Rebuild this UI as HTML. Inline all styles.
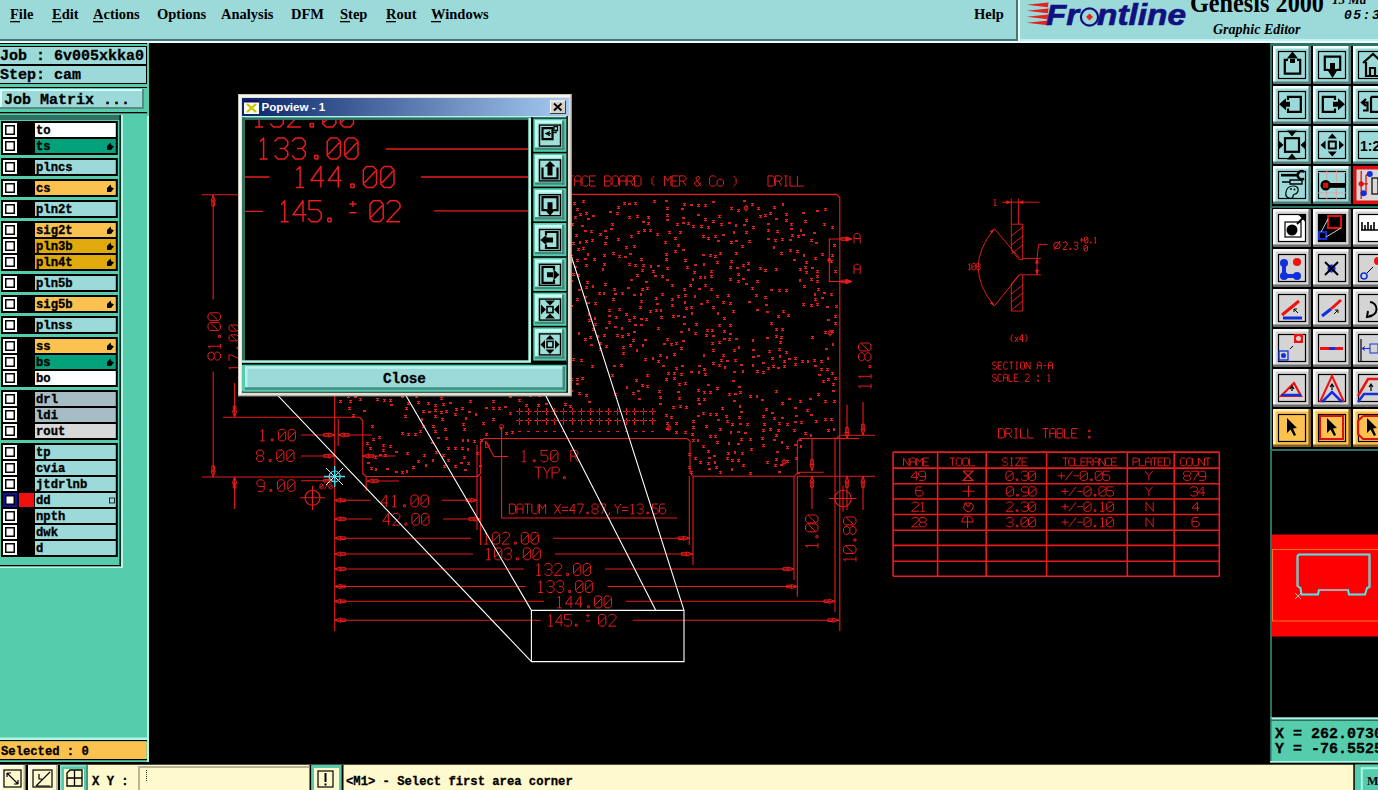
<!DOCTYPE html>
<html><head><meta charset="utf-8"><title>Genesis 2000 - Graphic Editor</title>
<style>html,body{margin:0;padding:0;background:#000;overflow:hidden}svg{display:block}</style></head>
<body><svg width="1378" height="790" viewBox="0 0 1378 790">
<rect x="0" y="0" width="1378" height="790" fill="#000" />
<rect x="0" y="0" width="1020" height="39" fill="#9cdada" />
<rect x="0" y="39" width="1020" height="2" fill="#4a7474" />
<rect x="1016" y="0" width="2" height="41" fill="#4a7474" />
<rect x="1018" y="0" width="2" height="41" fill="#e8fcfc" />
<rect x="1020" y="0" width="358" height="39" fill="#9cdada" />
<rect x="1020" y="39" width="358" height="2" fill="#c8f0f0" />
<rect x="0" y="41" width="1378" height="2" fill="#e8ffff" />
<text x="10" y="19" font-family="Liberation Serif" font-size="14.5" font-weight="bold" fill="#000" >File</text>
<rect x="10" y="21" width="10" height="1.3" fill="#000" />
<text x="52" y="19" font-family="Liberation Serif" font-size="14.5" font-weight="bold" fill="#000" >Edit</text>
<rect x="52" y="21" width="10" height="1.3" fill="#000" />
<text x="93" y="19" font-family="Liberation Serif" font-size="14.5" font-weight="bold" fill="#000" >Actions</text>
<rect x="93" y="21" width="10" height="1.3" fill="#000" />
<text x="157" y="19" font-family="Liberation Serif" font-size="14.5" font-weight="bold" fill="#000" >Options</text>
<text x="221" y="19" font-family="Liberation Serif" font-size="14.5" font-weight="bold" fill="#000" >Analysis</text>
<text x="291" y="19" font-family="Liberation Serif" font-size="14.5" font-weight="bold" fill="#000" >DFM</text>
<text x="340" y="19" font-family="Liberation Serif" font-size="14.5" font-weight="bold" fill="#000" >Step</text>
<rect x="340" y="21" width="10" height="1.3" fill="#000" />
<text x="386" y="19" font-family="Liberation Serif" font-size="14.5" font-weight="bold" fill="#000" >Rout</text>
<rect x="386" y="21" width="10" height="1.3" fill="#000" />
<text x="431" y="19" font-family="Liberation Serif" font-size="14.5" font-weight="bold" fill="#000" >Windows</text>
<rect x="431" y="21" width="10" height="1.3" fill="#000" />
<text x="974" y="19" font-family="Liberation Serif" font-size="14.5" font-weight="bold" fill="#000" >Help</text>
<g>
<path d="M1026.5 4.8 L1048.6 2.5999999999999996 L1047.8 7.199999999999999 Z" fill="#e82020"/>
<path d="M1026.5 10.8 L1048.6 8.600000000000001 L1047.8 13.200000000000001 Z" fill="#e82020"/>
<path d="M1026.5 16.8 L1048.6 14.600000000000001 L1047.8 19.2 Z" fill="#e82020"/>
<path d="M1026.5 22.8 L1048.6 20.6 L1047.8 25.2 Z" fill="#e82020"/>
<text x="1046" y="25" font-family="Liberation Sans" font-size="30" font-weight="bold" font-style="italic" fill="#10107e" stroke="#10107e" stroke-width="0.7" textLength="33" lengthAdjust="spacingAndGlyphs">Fr</text>
<circle cx="1089.5" cy="17" r="8.6" fill="none" stroke="#10107e" stroke-width="2.2"/><path d="M1089.5 13.5 L1093 17 L1089.5 20.5 L1086 17 Z" fill="#e82020"/>
<text x="1097" y="25" font-family="Liberation Sans" font-size="30" font-weight="bold" font-style="italic" fill="#10107e" stroke="#10107e" stroke-width="0.7" textLength="89" lengthAdjust="spacingAndGlyphs">ntline</text>
</g>
<text x="1190" y="12" font-family="Liberation Serif" font-size="27" font-weight="bold" fill="#000" textLength="134" lengthAdjust="spacingAndGlyphs">Genesis 2000</text>
<text x="1213" y="34" font-family="Liberation Serif" font-size="14" font-weight="bold" fill="#000" font-style="italic">Graphic Editor</text>
<text x="1332" y="4" font-family="Liberation Serif" font-size="13" font-weight="bold" fill="#000" font-style="italic">15  Ma</text>
<text x="1344" y="18.5" font-family="Liberation Mono" font-size="13" font-weight="bold" fill="#000" font-style="italic" letter-spacing="1.5">05:3</text>
<rect x="0" y="43" width="149" height="722" fill="#55cdad" />
<rect x="147" y="116" width="2" height="649" fill="#b4f6e6" />
<rect x="0" y="43" width="147" height="1" fill="#000" />
<rect x="0" y="46" width="147" height="1" fill="#000" />
<rect x="0" y="47" width="146" height="17" fill="#9cdada" />
<rect x="0" y="64" width="147" height="2" fill="#000" />
<rect x="0" y="66" width="146" height="17" fill="#9cdada" />
<rect x="0" y="83" width="147" height="1" fill="#000" />
<rect x="146" y="46" width="1" height="38" fill="#000" />
<text x="0" y="60" font-family="Liberation Mono" font-size="15" font-weight="bold" fill="#000" stroke="#000" stroke-width="0.3">Job : 6v005xkka0</text>
<text x="0" y="79" font-family="Liberation Mono" font-size="15" font-weight="bold" fill="#000" stroke="#000" stroke-width="0.3">Step: cam</text>
<rect x="0" y="87" width="147" height="1" fill="#000" />
<rect x="0" y="89" width="144" height="20" fill="#9cdada" />
<rect x="0" y="89" width="144" height="2" fill="#d8fafa" />
<rect x="0" y="89" width="2" height="20" fill="#d8fafa" />
<rect x="0" y="107" width="144" height="2" fill="#5a8a86" />
<rect x="142" y="89" width="2" height="20" fill="#5a8a86" />
<text x="4" y="104" font-family="Liberation Mono" font-size="15" font-weight="bold" fill="#000" stroke="#000" stroke-width="0.3">Job Matrix ...</text>
<rect x="0" y="112" width="147" height="1.3" fill="#000" />
<rect x="0" y="115" width="121" height="5" fill="#2e7062" />
<rect x="119.5" y="115" width="1.3" height="451" fill="#000" />
<rect x="121" y="115" width="2" height="453" fill="#b4f6e6" />
<rect x="0" y="566" width="123" height="2" fill="#b4f6e6" />
<rect x="0" y="565" width="121" height="1.3" fill="#000" />
<rect x="1" y="121" width="116.8" height="34" fill="#000" />
<rect x="3" y="123" width="14" height="14" fill="#fff" />
<rect x="5" y="125" width="10" height="10" fill="#000" />
<rect x="6.5" y="126.5" width="7" height="7" fill="#fff" />
<rect x="35" y="123" width="80.8" height="14" fill="#ffffff" />
<text x="36" y="134" font-family="Liberation Mono" font-size="12.2" font-weight="bold" fill="#000" stroke="#000" stroke-width="0.35">to</text>
<rect x="3" y="139" width="14" height="14" fill="#fff" />
<rect x="5" y="141" width="10" height="10" fill="#000" />
<rect x="6.5" y="142.5" width="7" height="7" fill="#fff" />
<rect x="35" y="139" width="80.8" height="14" fill="#04a27a" />
<text x="36" y="150" font-family="Liberation Mono" font-size="12.2" font-weight="bold" fill="#000" stroke="#000" stroke-width="0.35">ts</text>
<path d="M107 150 V146 L110.5 142.5 L111.3 145.3 L114 146.3 L111 150 Z" fill="#000"/>
<rect x="1" y="158" width="116.8" height="18" fill="#000" />
<rect x="3" y="160" width="14" height="14" fill="#fff" />
<rect x="5" y="162" width="10" height="10" fill="#000" />
<rect x="6.5" y="163.5" width="7" height="7" fill="#fff" />
<rect x="35" y="160" width="80.8" height="14" fill="#9cdada" />
<text x="36" y="171" font-family="Liberation Mono" font-size="12.2" font-weight="bold" fill="#000" stroke="#000" stroke-width="0.35">plncs</text>
<rect x="1" y="179" width="116.8" height="18" fill="#000" />
<rect x="3" y="181" width="14" height="14" fill="#fff" />
<rect x="5" y="183" width="10" height="10" fill="#000" />
<rect x="6.5" y="184.5" width="7" height="7" fill="#fff" />
<rect x="35" y="181" width="80.8" height="14" fill="#fcc250" />
<text x="36" y="192" font-family="Liberation Mono" font-size="12.2" font-weight="bold" fill="#000" stroke="#000" stroke-width="0.35">cs</text>
<path d="M107 192 V188 L110.5 184.5 L111.3 187.3 L114 188.3 L111 192 Z" fill="#000"/>
<rect x="1" y="200" width="116.8" height="18" fill="#000" />
<rect x="3" y="202" width="14" height="14" fill="#fff" />
<rect x="5" y="204" width="10" height="10" fill="#000" />
<rect x="6.5" y="205.5" width="7" height="7" fill="#fff" />
<rect x="35" y="202" width="80.8" height="14" fill="#9cdada" />
<text x="36" y="213" font-family="Liberation Mono" font-size="12.2" font-weight="bold" fill="#000" stroke="#000" stroke-width="0.35">pln2t</text>
<rect x="1" y="221" width="116.8" height="50" fill="#000" />
<rect x="3" y="223" width="14" height="14" fill="#fff" />
<rect x="5" y="225" width="10" height="10" fill="#000" />
<rect x="6.5" y="226.5" width="7" height="7" fill="#fff" />
<rect x="35" y="223" width="80.8" height="14" fill="#fcc250" />
<text x="36" y="234" font-family="Liberation Mono" font-size="12.2" font-weight="bold" fill="#000" stroke="#000" stroke-width="0.35">sig2t</text>
<path d="M107 234 V230 L110.5 226.5 L111.3 229.3 L114 230.3 L111 234 Z" fill="#000"/>
<rect x="3" y="239" width="14" height="14" fill="#fff" />
<rect x="5" y="241" width="10" height="10" fill="#000" />
<rect x="6.5" y="242.5" width="7" height="7" fill="#fff" />
<rect x="35" y="239" width="80.8" height="14" fill="#e0aa0c" />
<text x="36" y="250" font-family="Liberation Mono" font-size="12.2" font-weight="bold" fill="#000" stroke="#000" stroke-width="0.35">pln3b</text>
<path d="M107 250 V246 L110.5 242.5 L111.3 245.3 L114 246.3 L111 250 Z" fill="#000"/>
<rect x="3" y="255" width="14" height="14" fill="#fff" />
<rect x="5" y="257" width="10" height="10" fill="#000" />
<rect x="6.5" y="258.5" width="7" height="7" fill="#fff" />
<rect x="35" y="255" width="80.8" height="14" fill="#e0aa0c" />
<text x="36" y="266" font-family="Liberation Mono" font-size="12.2" font-weight="bold" fill="#000" stroke="#000" stroke-width="0.35">pln4t</text>
<path d="M107 266 V262 L110.5 258.5 L111.3 261.3 L114 262.3 L111 266 Z" fill="#000"/>
<rect x="1" y="274" width="116.8" height="18" fill="#000" />
<rect x="3" y="276" width="14" height="14" fill="#fff" />
<rect x="5" y="278" width="10" height="10" fill="#000" />
<rect x="6.5" y="279.5" width="7" height="7" fill="#fff" />
<rect x="35" y="276" width="80.8" height="14" fill="#9cdada" />
<text x="36" y="287" font-family="Liberation Mono" font-size="12.2" font-weight="bold" fill="#000" stroke="#000" stroke-width="0.35">pln5b</text>
<rect x="1" y="295" width="116.8" height="18" fill="#000" />
<rect x="3" y="297" width="14" height="14" fill="#fff" />
<rect x="5" y="299" width="10" height="10" fill="#000" />
<rect x="6.5" y="300.5" width="7" height="7" fill="#fff" />
<rect x="35" y="297" width="80.8" height="14" fill="#fcc250" />
<text x="36" y="308" font-family="Liberation Mono" font-size="12.2" font-weight="bold" fill="#000" stroke="#000" stroke-width="0.35">sig5b</text>
<path d="M107 308 V304 L110.5 300.5 L111.3 303.3 L114 304.3 L111 308 Z" fill="#000"/>
<rect x="1" y="316" width="116.8" height="18" fill="#000" />
<rect x="3" y="318" width="14" height="14" fill="#fff" />
<rect x="5" y="320" width="10" height="10" fill="#000" />
<rect x="6.5" y="321.5" width="7" height="7" fill="#fff" />
<rect x="35" y="318" width="80.8" height="14" fill="#9cdada" />
<text x="36" y="329" font-family="Liberation Mono" font-size="12.2" font-weight="bold" fill="#000" stroke="#000" stroke-width="0.35">plnss</text>
<rect x="1" y="337" width="116.8" height="50" fill="#000" />
<rect x="3" y="339" width="14" height="14" fill="#fff" />
<rect x="5" y="341" width="10" height="10" fill="#000" />
<rect x="6.5" y="342.5" width="7" height="7" fill="#fff" />
<rect x="35" y="339" width="80.8" height="14" fill="#fcc250" />
<text x="36" y="350" font-family="Liberation Mono" font-size="12.2" font-weight="bold" fill="#000" stroke="#000" stroke-width="0.35">ss</text>
<path d="M107 350 V346 L110.5 342.5 L111.3 345.3 L114 346.3 L111 350 Z" fill="#000"/>
<rect x="3" y="355" width="14" height="14" fill="#fff" />
<rect x="5" y="357" width="10" height="10" fill="#000" />
<rect x="6.5" y="358.5" width="7" height="7" fill="#fff" />
<rect x="35" y="355" width="80.8" height="14" fill="#04a27a" />
<text x="36" y="366" font-family="Liberation Mono" font-size="12.2" font-weight="bold" fill="#000" stroke="#000" stroke-width="0.35">bs</text>
<path d="M107 366 V362 L110.5 358.5 L111.3 361.3 L114 362.3 L111 366 Z" fill="#000"/>
<rect x="3" y="371" width="14" height="14" fill="#fff" />
<rect x="5" y="373" width="10" height="10" fill="#000" />
<rect x="6.5" y="374.5" width="7" height="7" fill="#fff" />
<rect x="35" y="371" width="80.8" height="14" fill="#ffffff" />
<text x="36" y="382" font-family="Liberation Mono" font-size="12.2" font-weight="bold" fill="#000" stroke="#000" stroke-width="0.35">bo</text>
<rect x="1" y="390" width="116.8" height="50" fill="#000" />
<rect x="3" y="392" width="14" height="14" fill="#fff" />
<rect x="5" y="394" width="10" height="10" fill="#000" />
<rect x="6.5" y="395.5" width="7" height="7" fill="#fff" />
<rect x="35" y="392" width="80.8" height="14" fill="#a8bcc4" />
<text x="36" y="403" font-family="Liberation Mono" font-size="12.2" font-weight="bold" fill="#000" stroke="#000" stroke-width="0.35">drl</text>
<rect x="3" y="408" width="14" height="14" fill="#fff" />
<rect x="5" y="410" width="10" height="10" fill="#000" />
<rect x="6.5" y="411.5" width="7" height="7" fill="#fff" />
<rect x="35" y="408" width="80.8" height="14" fill="#a8bcc4" />
<text x="36" y="419" font-family="Liberation Mono" font-size="12.2" font-weight="bold" fill="#000" stroke="#000" stroke-width="0.35">ldi</text>
<rect x="3" y="424" width="14" height="14" fill="#fff" />
<rect x="5" y="426" width="10" height="10" fill="#000" />
<rect x="6.5" y="427.5" width="7" height="7" fill="#fff" />
<rect x="35" y="424" width="80.8" height="14" fill="#d8d8d8" />
<text x="36" y="435" font-family="Liberation Mono" font-size="12.2" font-weight="bold" fill="#000" stroke="#000" stroke-width="0.35">rout</text>
<rect x="1" y="443" width="116.8" height="114" fill="#000" />
<rect x="3" y="445" width="14" height="14" fill="#fff" />
<rect x="5" y="447" width="10" height="10" fill="#000" />
<rect x="6.5" y="448.5" width="7" height="7" fill="#fff" />
<rect x="35" y="445" width="80.8" height="14" fill="#9cdada" />
<text x="36" y="456" font-family="Liberation Mono" font-size="12.2" font-weight="bold" fill="#000" stroke="#000" stroke-width="0.35">tp</text>
<rect x="3" y="461" width="14" height="14" fill="#fff" />
<rect x="5" y="463" width="10" height="10" fill="#000" />
<rect x="6.5" y="464.5" width="7" height="7" fill="#fff" />
<rect x="35" y="461" width="80.8" height="14" fill="#9cdada" />
<text x="36" y="472" font-family="Liberation Mono" font-size="12.2" font-weight="bold" fill="#000" stroke="#000" stroke-width="0.35">cvia</text>
<rect x="3" y="477" width="14" height="14" fill="#fff" />
<rect x="5" y="479" width="10" height="10" fill="#000" />
<rect x="6.5" y="480.5" width="7" height="7" fill="#fff" />
<rect x="35" y="477" width="80.8" height="14" fill="#9cdada" />
<text x="36" y="488" font-family="Liberation Mono" font-size="12.2" font-weight="bold" fill="#000" stroke="#000" stroke-width="0.35">jtdrlnb</text>
<rect x="3" y="493" width="14" height="14" fill="#1010a0" />
<rect x="5" y="495" width="10" height="10" fill="#000" />
<rect x="6.5" y="496.5" width="7" height="7" fill="#fff" />
<rect x="19" y="493" width="15" height="14" fill="#f01010" />
<rect x="35" y="493" width="80.8" height="14" fill="#9cdada" />
<text x="36" y="504" font-family="Liberation Mono" font-size="12.2" font-weight="bold" fill="#000" stroke="#000" stroke-width="0.35">dd</text>
<rect x="109.5" y="498" width="5" height="5" fill="none" stroke="#000" stroke-width="0.8"/>
<rect x="3" y="509" width="14" height="14" fill="#fff" />
<rect x="5" y="511" width="10" height="10" fill="#000" />
<rect x="6.5" y="512.5" width="7" height="7" fill="#fff" />
<rect x="35" y="509" width="80.8" height="14" fill="#9cdada" />
<text x="36" y="520" font-family="Liberation Mono" font-size="12.2" font-weight="bold" fill="#000" stroke="#000" stroke-width="0.35">npth</text>
<rect x="3" y="525" width="14" height="14" fill="#fff" />
<rect x="5" y="527" width="10" height="10" fill="#000" />
<rect x="6.5" y="528.5" width="7" height="7" fill="#fff" />
<rect x="35" y="525" width="80.8" height="14" fill="#9cdada" />
<text x="36" y="536" font-family="Liberation Mono" font-size="12.2" font-weight="bold" fill="#000" stroke="#000" stroke-width="0.35">dwk</text>
<rect x="3" y="541" width="14" height="14" fill="#fff" />
<rect x="5" y="543" width="10" height="10" fill="#000" />
<rect x="6.5" y="544.5" width="7" height="7" fill="#fff" />
<rect x="35" y="541" width="80.8" height="14" fill="#9cdada" />
<text x="36" y="552" font-family="Liberation Mono" font-size="12.2" font-weight="bold" fill="#000" stroke="#000" stroke-width="0.35">d</text>
<rect x="0" y="737.5" width="147" height="2.5" fill="#b4f6e6" />
<rect x="0" y="740" width="147" height="1.3" fill="#000" />
<rect x="0" y="741.3" width="146.5" height="17.7" fill="#fcc250" />
<rect x="0" y="759" width="147" height="1.2" fill="#000" />
<text x="1" y="755" font-family="Liberation Mono" font-size="12.2" font-weight="bold" fill="#000" stroke="#000" stroke-width="0.3">Selected : 0</text>
<rect x="0" y="763" width="1378" height="27" fill="#fffacd" />
<rect x="0" y="762" width="1378" height="1.5" fill="#000" />
<rect x="0" y="765" width="25.5" height="25" fill="#fffacd" />
<rect x="0" y="765" width="25.5" height="1.5" fill="#fff" />
<rect x="0" y="765" width="1.5" height="25" fill="#fff" />
<rect x="23.5" y="765" width="2" height="25" fill="#b8b494" />
<rect x="25.5" y="765" width="2.5" height="25" fill="#000" />
<rect x="28" y="765" width="30" height="25" fill="#fffacd" />
<rect x="28" y="765" width="30" height="1.5" fill="#fff" />
<rect x="28" y="765" width="1.5" height="25" fill="#fff" />
<rect x="56" y="765" width="2" height="25" fill="#b8b494" />
<rect x="58" y="765" width="2" height="25" fill="#000" />
<rect x="60" y="765" width="28" height="25" fill="#55cdad" />
<rect x="60" y="765" width="28" height="1.5" fill="#8ee0cc" />
<rect x="60" y="765" width="1.5" height="25" fill="#8ee0cc" />
<rect x="86" y="765" width="2" height="25" fill="#3c9c84" />
<rect x="64" y="769" width="20" height="21" fill="#fffacd" />
<rect x="4" y="770" width="17" height="17" fill="none" stroke="#000" stroke-width="1.2"/>
<path d="M7 773 L18 784 M7 773 l0 4 M7 773 l4 0 M18 784 l-4 0 M18 784 l0 -4" stroke="#000" stroke-width="1.2" fill="none"/>
<rect x="33" y="770" width="19" height="17" fill="none" stroke="#000" stroke-width="1.2"/>
<path d="M36 786 L50 772 M36 786 L50 786 M39 774 L39 779 L42 779" stroke="#000" stroke-width="1.2" fill="none"/>
<path d="M67 779 L67 773 L70 770 L82 770 L82 786 L67 786 Z M74.5 770 L74.5 786 M67 778 L82 778" stroke="#000" stroke-width="1.3" fill="none"/>
<text x="92" y="785" font-family="Liberation Mono" font-size="12.2" font-weight="bold" fill="#000" stroke="#000" stroke-width="0.3">X Y :</text>
<rect x="138" y="766" width="171" height="24" fill="#b8b494" />
<rect x="140" y="768" width="169" height="22" fill="#fffacd" />
<path d="M146.5 770 L146.5 782" stroke="#000" stroke-width="0.8" stroke-dasharray="1,1"/>
<rect x="309.5" y="765" width="2" height="25" fill="#000" />
<rect x="311.5" y="765" width="30" height="25" fill="#55cdad" />
<rect x="314" y="768" width="25" height="22" fill="#fffacd" />
<rect x="318" y="771" width="15" height="16" fill="none" stroke="#000" stroke-width="1.2"/>
<rect x="324.5" y="773" width="2" height="9" fill="#000"/><rect x="324.5" y="783.5" width="2" height="2" fill="#000"/>
<rect x="341.5" y="765" width="2" height="25" fill="#000" />
<text x="346" y="785" font-family="Liberation Mono" font-size="12.2" font-weight="bold" fill="#000" stroke="#000" stroke-width="0.3">&lt;M1&gt; - Select first area corner</text>
<rect x="0" y="763" width="1378" height="1.7" fill="#000" />
<rect x="1353.3" y="763" width="1.6" height="27" fill="#000" />
<rect x="1354.9" y="764.7" width="24" height="26" fill="#55cdad" />
<rect x="1360.8" y="767.2" width="18" height="2" fill="#a8f8e8" />
<rect x="1360.8" y="767.2" width="2" height="23" fill="#a8f8e8" />
<text x="1367" y="785" font-family="Liberation Serif" font-size="12.2" font-weight="bold" fill="#000" >MD</text>
<rect x="1270" y="43" width="108" height="720" fill="#000" />
<rect x="1270" y="43" width="2" height="165" fill="#2e7062" />
<rect x="1272" y="43" width="106" height="3" fill="#2e7062" />
<rect x="1270" y="206" width="108" height="2" fill="#2e7062" />
<rect x="1272" y="208" width="106" height="1" fill="#000" />
<rect x="1273" y="46" width="38" height="38" fill="#9cdada" />
<rect x="1273" y="46" width="38" height="2.5" fill="#f4ffff" />
<rect x="1273" y="46" width="2.5" height="38" fill="#f4ffff" />
<rect x="1273" y="81.5" width="38" height="2.5" fill="#557a78" />
<rect x="1308.5" y="46" width="2.5" height="38" fill="#557a78" />
<rect x="1278.5" y="51.5" width="27" height="27" fill="none" stroke="#000" stroke-width="1.2"/>
<rect x="1313" y="46" width="38" height="38" fill="#9cdada" />
<rect x="1313" y="46" width="38" height="2.5" fill="#f4ffff" />
<rect x="1313" y="46" width="2.5" height="38" fill="#f4ffff" />
<rect x="1313" y="81.5" width="38" height="2.5" fill="#557a78" />
<rect x="1348.5" y="46" width="2.5" height="38" fill="#557a78" />
<rect x="1318.5" y="51.5" width="27" height="27" fill="none" stroke="#000" stroke-width="1.2"/>
<rect x="1353" y="46" width="38" height="38" fill="#9cdada" />
<rect x="1353" y="46" width="38" height="2.5" fill="#f4ffff" />
<rect x="1353" y="46" width="2.5" height="38" fill="#f4ffff" />
<rect x="1353" y="81.5" width="38" height="2.5" fill="#557a78" />
<rect x="1388.5" y="46" width="2.5" height="38" fill="#557a78" />
<rect x="1358.5" y="51.5" width="27" height="27" fill="none" stroke="#000" stroke-width="1.2"/>
<rect x="1273" y="86" width="38" height="38" fill="#9cdada" />
<rect x="1273" y="86" width="38" height="2.5" fill="#f4ffff" />
<rect x="1273" y="86" width="2.5" height="38" fill="#f4ffff" />
<rect x="1273" y="121.5" width="38" height="2.5" fill="#557a78" />
<rect x="1308.5" y="86" width="2.5" height="38" fill="#557a78" />
<rect x="1278.5" y="91.5" width="27" height="27" fill="none" stroke="#000" stroke-width="1.2"/>
<rect x="1313" y="86" width="38" height="38" fill="#9cdada" />
<rect x="1313" y="86" width="38" height="2.5" fill="#f4ffff" />
<rect x="1313" y="86" width="2.5" height="38" fill="#f4ffff" />
<rect x="1313" y="121.5" width="38" height="2.5" fill="#557a78" />
<rect x="1348.5" y="86" width="2.5" height="38" fill="#557a78" />
<rect x="1318.5" y="91.5" width="27" height="27" fill="none" stroke="#000" stroke-width="1.2"/>
<rect x="1353" y="86" width="38" height="38" fill="#9cdada" />
<rect x="1353" y="86" width="38" height="2.5" fill="#f4ffff" />
<rect x="1353" y="86" width="2.5" height="38" fill="#f4ffff" />
<rect x="1353" y="121.5" width="38" height="2.5" fill="#557a78" />
<rect x="1388.5" y="86" width="2.5" height="38" fill="#557a78" />
<rect x="1358.5" y="91.5" width="27" height="27" fill="none" stroke="#000" stroke-width="1.2"/>
<rect x="1273" y="126" width="38" height="38" fill="#9cdada" />
<rect x="1273" y="126" width="38" height="2.5" fill="#f4ffff" />
<rect x="1273" y="126" width="2.5" height="38" fill="#f4ffff" />
<rect x="1273" y="161.5" width="38" height="2.5" fill="#557a78" />
<rect x="1308.5" y="126" width="2.5" height="38" fill="#557a78" />
<rect x="1278.5" y="131.5" width="27" height="27" fill="none" stroke="#000" stroke-width="1.2"/>
<rect x="1313" y="126" width="38" height="38" fill="#9cdada" />
<rect x="1313" y="126" width="38" height="2.5" fill="#f4ffff" />
<rect x="1313" y="126" width="2.5" height="38" fill="#f4ffff" />
<rect x="1313" y="161.5" width="38" height="2.5" fill="#557a78" />
<rect x="1348.5" y="126" width="2.5" height="38" fill="#557a78" />
<rect x="1318.5" y="131.5" width="27" height="27" fill="none" stroke="#000" stroke-width="1.2"/>
<rect x="1353" y="126" width="38" height="38" fill="#9cdada" />
<rect x="1353" y="126" width="38" height="2.5" fill="#f4ffff" />
<rect x="1353" y="126" width="2.5" height="38" fill="#f4ffff" />
<rect x="1353" y="161.5" width="38" height="2.5" fill="#557a78" />
<rect x="1388.5" y="126" width="2.5" height="38" fill="#557a78" />
<rect x="1358.5" y="131.5" width="27" height="27" fill="none" stroke="#000" stroke-width="1.2"/>
<rect x="1273" y="166" width="38" height="38" fill="#9cdada" />
<rect x="1273" y="166" width="38" height="2.5" fill="#f4ffff" />
<rect x="1273" y="166" width="2.5" height="38" fill="#f4ffff" />
<rect x="1273" y="201.5" width="38" height="2.5" fill="#557a78" />
<rect x="1308.5" y="166" width="2.5" height="38" fill="#557a78" />
<rect x="1278.5" y="171.5" width="27" height="27" fill="none" stroke="#000" stroke-width="1.2"/>
<rect x="1313" y="166" width="38" height="38" fill="#9cdada" />
<rect x="1313" y="166" width="38" height="2.5" fill="#f4ffff" />
<rect x="1313" y="166" width="2.5" height="38" fill="#f4ffff" />
<rect x="1313" y="201.5" width="38" height="2.5" fill="#557a78" />
<rect x="1348.5" y="166" width="2.5" height="38" fill="#557a78" />
<rect x="1318.5" y="171.5" width="27" height="27" fill="none" stroke="#000" stroke-width="1.2"/>
<rect x="1353" y="166" width="38" height="38" fill="#9cdada" />
<rect x="1353" y="166" width="38" height="2.5" fill="#f4ffff" />
<rect x="1353" y="166" width="2.5" height="38" fill="#f4ffff" />
<rect x="1353" y="201.5" width="38" height="2.5" fill="#557a78" />
<rect x="1388.5" y="166" width="2.5" height="38" fill="#557a78" />
<rect x="1358.5" y="171.5" width="27" height="27" fill="none" stroke="#000" stroke-width="1.2"/>
<rect x="1270" y="208" width="2" height="245" fill="#4a8078" />
<rect x="1273" y="209" width="38" height="38" fill="#d4d4d4" />
<rect x="1273" y="209" width="38" height="2.5" fill="#f8f8f8" />
<rect x="1273" y="209" width="2.5" height="38" fill="#f8f8f8" />
<rect x="1273" y="244.5" width="38" height="2.5" fill="#6c6c6c" />
<rect x="1308.5" y="209" width="2.5" height="38" fill="#6c6c6c" />
<rect x="1278" y="214" width="28" height="28" fill="#fff" />
<rect x="1278.5" y="214.5" width="27" height="27" fill="none" stroke="#000" stroke-width="1.2"/>
<rect x="1313" y="209" width="38" height="38" fill="#d4d4d4" />
<rect x="1313" y="209" width="38" height="2.5" fill="#f8f8f8" />
<rect x="1313" y="209" width="2.5" height="38" fill="#f8f8f8" />
<rect x="1313" y="244.5" width="38" height="2.5" fill="#6c6c6c" />
<rect x="1348.5" y="209" width="2.5" height="38" fill="#6c6c6c" />
<rect x="1318" y="214" width="28" height="28" fill="#000" />
<rect x="1318.5" y="214.5" width="27" height="27" fill="none" stroke="#000" stroke-width="1.2"/>
<rect x="1353" y="209" width="38" height="38" fill="#d4d4d4" />
<rect x="1353" y="209" width="38" height="2.5" fill="#f8f8f8" />
<rect x="1353" y="209" width="2.5" height="38" fill="#f8f8f8" />
<rect x="1353" y="244.5" width="38" height="2.5" fill="#6c6c6c" />
<rect x="1388.5" y="209" width="2.5" height="38" fill="#6c6c6c" />
<rect x="1358" y="214" width="28" height="28" fill="#fff" />
<rect x="1358.5" y="214.5" width="27" height="27" fill="none" stroke="#000" stroke-width="1.2"/>
<rect x="1273" y="249" width="38" height="38" fill="#d4d4d4" />
<rect x="1273" y="249" width="38" height="2.5" fill="#f8f8f8" />
<rect x="1273" y="249" width="2.5" height="38" fill="#f8f8f8" />
<rect x="1273" y="284.5" width="38" height="2.5" fill="#6c6c6c" />
<rect x="1308.5" y="249" width="2.5" height="38" fill="#6c6c6c" />
<rect x="1278.5" y="254.5" width="27" height="27" fill="none" stroke="#000" stroke-width="1.2"/>
<rect x="1313" y="249" width="38" height="38" fill="#d4d4d4" />
<rect x="1313" y="249" width="38" height="2.5" fill="#f8f8f8" />
<rect x="1313" y="249" width="2.5" height="38" fill="#f8f8f8" />
<rect x="1313" y="284.5" width="38" height="2.5" fill="#6c6c6c" />
<rect x="1348.5" y="249" width="2.5" height="38" fill="#6c6c6c" />
<rect x="1318.5" y="254.5" width="27" height="27" fill="none" stroke="#000" stroke-width="1.2"/>
<rect x="1353" y="249" width="38" height="38" fill="#d4d4d4" />
<rect x="1353" y="249" width="38" height="2.5" fill="#f8f8f8" />
<rect x="1353" y="249" width="2.5" height="38" fill="#f8f8f8" />
<rect x="1353" y="284.5" width="38" height="2.5" fill="#6c6c6c" />
<rect x="1388.5" y="249" width="2.5" height="38" fill="#6c6c6c" />
<rect x="1358.5" y="254.5" width="27" height="27" fill="none" stroke="#000" stroke-width="1.2"/>
<rect x="1273" y="289" width="38" height="38" fill="#d4d4d4" />
<rect x="1273" y="289" width="38" height="2.5" fill="#f8f8f8" />
<rect x="1273" y="289" width="2.5" height="38" fill="#f8f8f8" />
<rect x="1273" y="324.5" width="38" height="2.5" fill="#6c6c6c" />
<rect x="1308.5" y="289" width="2.5" height="38" fill="#6c6c6c" />
<rect x="1278.5" y="294.5" width="27" height="27" fill="none" stroke="#000" stroke-width="1.2"/>
<rect x="1313" y="289" width="38" height="38" fill="#d4d4d4" />
<rect x="1313" y="289" width="38" height="2.5" fill="#f8f8f8" />
<rect x="1313" y="289" width="2.5" height="38" fill="#f8f8f8" />
<rect x="1313" y="324.5" width="38" height="2.5" fill="#6c6c6c" />
<rect x="1348.5" y="289" width="2.5" height="38" fill="#6c6c6c" />
<rect x="1318.5" y="294.5" width="27" height="27" fill="none" stroke="#000" stroke-width="1.2"/>
<rect x="1353" y="289" width="38" height="38" fill="#d4d4d4" />
<rect x="1353" y="289" width="38" height="2.5" fill="#f8f8f8" />
<rect x="1353" y="289" width="2.5" height="38" fill="#f8f8f8" />
<rect x="1353" y="324.5" width="38" height="2.5" fill="#6c6c6c" />
<rect x="1388.5" y="289" width="2.5" height="38" fill="#6c6c6c" />
<rect x="1358.5" y="294.5" width="27" height="27" fill="none" stroke="#000" stroke-width="1.2"/>
<rect x="1273" y="329" width="38" height="38" fill="#d4d4d4" />
<rect x="1273" y="329" width="38" height="2.5" fill="#f8f8f8" />
<rect x="1273" y="329" width="2.5" height="38" fill="#f8f8f8" />
<rect x="1273" y="364.5" width="38" height="2.5" fill="#6c6c6c" />
<rect x="1308.5" y="329" width="2.5" height="38" fill="#6c6c6c" />
<rect x="1278.5" y="334.5" width="27" height="27" fill="none" stroke="#000" stroke-width="1.2"/>
<rect x="1313" y="329" width="38" height="38" fill="#d4d4d4" />
<rect x="1313" y="329" width="38" height="2.5" fill="#f8f8f8" />
<rect x="1313" y="329" width="2.5" height="38" fill="#f8f8f8" />
<rect x="1313" y="364.5" width="38" height="2.5" fill="#6c6c6c" />
<rect x="1348.5" y="329" width="2.5" height="38" fill="#6c6c6c" />
<rect x="1318.5" y="334.5" width="27" height="27" fill="none" stroke="#000" stroke-width="1.2"/>
<rect x="1353" y="329" width="38" height="38" fill="#d4d4d4" />
<rect x="1353" y="329" width="38" height="2.5" fill="#f8f8f8" />
<rect x="1353" y="329" width="2.5" height="38" fill="#f8f8f8" />
<rect x="1353" y="364.5" width="38" height="2.5" fill="#6c6c6c" />
<rect x="1388.5" y="329" width="2.5" height="38" fill="#6c6c6c" />
<rect x="1358.5" y="334.5" width="27" height="27" fill="none" stroke="#000" stroke-width="1.2"/>
<rect x="1273" y="369" width="38" height="38" fill="#d4d4d4" />
<rect x="1273" y="369" width="38" height="2.5" fill="#f8f8f8" />
<rect x="1273" y="369" width="2.5" height="38" fill="#f8f8f8" />
<rect x="1273" y="404.5" width="38" height="2.5" fill="#6c6c6c" />
<rect x="1308.5" y="369" width="2.5" height="38" fill="#6c6c6c" />
<rect x="1278.5" y="374.5" width="27" height="27" fill="none" stroke="#000" stroke-width="1.2"/>
<rect x="1313" y="369" width="38" height="38" fill="#d4d4d4" />
<rect x="1313" y="369" width="38" height="2.5" fill="#f8f8f8" />
<rect x="1313" y="369" width="2.5" height="38" fill="#f8f8f8" />
<rect x="1313" y="404.5" width="38" height="2.5" fill="#6c6c6c" />
<rect x="1348.5" y="369" width="2.5" height="38" fill="#6c6c6c" />
<rect x="1318.5" y="374.5" width="27" height="27" fill="none" stroke="#000" stroke-width="1.2"/>
<rect x="1353" y="369" width="38" height="38" fill="#d4d4d4" />
<rect x="1353" y="369" width="38" height="2.5" fill="#f8f8f8" />
<rect x="1353" y="369" width="2.5" height="38" fill="#f8f8f8" />
<rect x="1353" y="404.5" width="38" height="2.5" fill="#6c6c6c" />
<rect x="1388.5" y="369" width="2.5" height="38" fill="#6c6c6c" />
<rect x="1358.5" y="374.5" width="27" height="27" fill="none" stroke="#000" stroke-width="1.2"/>
<rect x="1273" y="409" width="38" height="38" fill="#fcc250" />
<rect x="1273" y="409" width="38" height="2.5" fill="#fff0c0" />
<rect x="1273" y="409" width="2.5" height="38" fill="#fff0c0" />
<rect x="1273" y="444.5" width="38" height="2.5" fill="#806020" />
<rect x="1308.5" y="409" width="2.5" height="38" fill="#806020" />
<rect x="1278.5" y="414.5" width="27" height="27" fill="none" stroke="#000" stroke-width="1.2"/>
<rect x="1313" y="409" width="38" height="38" fill="#fcc250" />
<rect x="1313" y="409" width="38" height="2.5" fill="#fff0c0" />
<rect x="1313" y="409" width="2.5" height="38" fill="#fff0c0" />
<rect x="1313" y="444.5" width="38" height="2.5" fill="#806020" />
<rect x="1348.5" y="409" width="2.5" height="38" fill="#806020" />
<rect x="1318.5" y="414.5" width="27" height="27" fill="none" stroke="#000" stroke-width="1.2"/>
<rect x="1353" y="409" width="38" height="38" fill="#fcc250" />
<rect x="1353" y="409" width="38" height="2.5" fill="#fff0c0" />
<rect x="1353" y="409" width="2.5" height="38" fill="#fff0c0" />
<rect x="1353" y="444.5" width="38" height="2.5" fill="#806020" />
<rect x="1388.5" y="409" width="2.5" height="38" fill="#806020" />
<rect x="1358.5" y="414.5" width="27" height="27" fill="none" stroke="#000" stroke-width="1.2"/>
<rect x="1270" y="449" width="108" height="2" fill="#2e7062" />
<rect x="1270" y="451" width="2" height="270" fill="#2e7062" />
<path d="M1288 59.8 H1284.8 V73.6 H1300.2 V59.8 H1297" stroke="#000" fill="none" stroke-width="2.2"/><path d="M1292.5 51.5 L1286.8 58.5 L1298.2 58.5 Z M1290 58 h5 v5 h-5 z" fill="#000"/>
<path d="M1328 69.8 H1324.8 V56.6 H1340.2 V69.8 H1337" stroke="#000" fill="none" stroke-width="2.2"/><path d="M1332.5 78 L1326.8 69 L1338.2 69 Z M1330 63 h5 v6.5 h-5 z" fill="#000"/>
<path d="M1363 63 L1373 54 L1383 63 M1366 62 L1366 76 L1380 76 M1370 76 L1370 68 L1375 68 L1375 76" stroke="#000" fill="none" stroke-width="2.2"/>
<path d="M1288 100 V96.8 H1300.8 V111.8 H1288 V108.5" stroke="#000" fill="none" stroke-width="2.2"/><path d="M1279 104.3 L1286 98.3 L1286 110.3 Z M1285 101.8 h5 v5 h-5 z" fill="#000"/>
<path d="M1335 100 V96.8 H1322.8 V111.8 H1335 V108.5" stroke="#000" fill="none" stroke-width="2.2"/><path d="M1345 104.3 L1338 98.3 L1338 110.3 Z M1333 101.8 h5 v5 h-5 z" fill="#000"/>
<path d="M1366 99 L1362 102.5 L1366 106 M1362 102.5 H1367.5 V110.5 H1363 M1371 96.8 H1380 M1371 96.8 V111.8 H1380" stroke="#000" fill="none" stroke-width="2.2"/>
<rect x="1285" y="138.2" width="14" height="13.6" stroke="#000" fill="none" stroke-width="2.2"/><path d="M1292 136.5 L1287 130.5 L1297 130.5 Z M1292 153.5 L1287 159.5 L1297 159.5 Z M1283.5 145 L1278 140 L1278 150 Z M1300.5 145 L1306 140 L1306 150 Z" fill="#000"/>
<rect x="1328.8" y="141.5" width="7" height="7" stroke="#000" stroke-width="2" fill="none"/><path d="M1332.3 133.5 L1327.8 138.5 L1336.8 138.5 Z M1332.3 156.5 L1327.8 151.5 L1336.8 151.5 Z M1320.5 145 L1325.5 140.5 L1325.5 149.5 Z M1344 145 L1339 140.5 L1339 149.5 Z" fill="#000"/>
<text x="1360" y="150.5" font-family="Liberation Sans" font-weight="bold" font-size="14" fill="#000">1:2</text>
<path d="M1281 175.2 H1297" stroke="#000" stroke-width="2.6"/><path d="M1304 172 A4 4 0 1 0 1304 178.5" stroke="#000" stroke-width="2.4" fill="none"/><path d="M1282 182 H1290 M1290 180 H1302 V184 H1290 Z" stroke="#000" stroke-width="1.3" fill="none"/><path d="M1286 192 q1 -6 7 -6 q6 0 5 5 q-1 3 -3 3 q-2 0 -2 3 q-1 2 -4 1 q-4 -1 -3 -6 z" stroke="#000" fill="none" stroke-width="1.2"/><circle cx="1291" cy="189" r="0.9" fill="#000"/><circle cx="1294.5" cy="189.5" r="0.9" fill="#000"/>
<path d="M1318 172.4 H1346 M1318 192.9 H1346 M1326.8 170 V201 M1336.4 170 V201" stroke="#e0a0a0" stroke-width="0.9"/><circle cx="1325.7" cy="185.3" r="5.2" fill="#000"/><rect x="1323.2" y="182.8" width="5" height="5" fill="#e01010"/><rect x="1330" y="183" width="15" height="4.8" fill="#000"/>
<rect x="1353" y="166" width="25" height="38" fill="#e01010"/><rect x="1356.5" y="169.5" width="21.5" height="31" fill="#d8d8d8"/><path d="M1361.2 171 V199 M1361.2 183.8 H1368 M1366 175 V195 M1366 175 H1370 M1366 193 H1363" stroke="#e01010" stroke-width="1.3" fill="none"/><circle cx="1369.8" cy="174" r="3" fill="#1030e0"/><circle cx="1361.2" cy="183.8" r="2.6" fill="#e01010"/><circle cx="1363.5" cy="193.3" r="3" fill="#1030e0"/><rect x="1372" y="178" width="6" height="16" fill="none" stroke="#000" stroke-width="1.2"/>
<rect x="1285" y="222" width="16" height="15" fill="none" stroke="#000" stroke-width="1.2"/><circle cx="1292" cy="230" r="5.5" fill="#000"/><path d="M1297 224 L1304 217 M1301 216 L1305 216 L1305 220 Z" stroke="#000" stroke-width="2" fill="#000"/>
<rect x="1328" y="216" width="13" height="12" fill="none" stroke="#e01010" stroke-width="2"/><rect x="1319" y="232" width="7" height="7" fill="none" stroke="#1030e0" stroke-width="2"/><path d="M1321 232 L1328 219 M1326 237 L1341 228" stroke="#fff" stroke-width="0.8"/>
<path d="M1361 230 L1378 230 M1362 222 L1362 230 M1365 225 L1365 230 M1368 222 L1368 230 M1371 225 L1371 230 M1374 222 L1374 230" stroke="#000" stroke-width="1.6"/>
<path d="M1284 264 L1284 276 L1296 276" stroke="#1030e0" stroke-width="4" fill="none"/><circle cx="1284" cy="263" r="4" fill="#1030e0"/><circle cx="1284" cy="276" r="4" fill="#1030e0"/><circle cx="1297" cy="276" r="4" fill="#1030e0"/><circle cx="1297" cy="262" r="4" fill="#f01010"/>
<circle cx="1331.5" cy="268.5" r="4" fill="#1030e0"/><path d="M1325 262 L1338 275 M1338 262 L1325 275" stroke="#000" stroke-width="2"/>
<circle cx="1364" cy="276" r="3" fill="none" stroke="#1030e0" stroke-width="1.6"/><circle cx="1378" cy="261" r="4" fill="#f01010"/><path d="M1367 273 L1373 267" stroke="#000" stroke-width="1"/>
<path d="M1282 315 L1299 301" stroke="#f01010" stroke-width="3"/><path d="M1283 318 L1302 318" stroke="#1030e0" stroke-width="3"/><path d="M1298 313 L1294 309 M1294 309 L1294 312 M1294 309 L1297 309" stroke="#000" stroke-width="1"/>
<path d="M1322 316 L1331 309" stroke="#1030e0" stroke-width="3"/><path d="M1331 309 L1341 300" stroke="#f01010" stroke-width="3"/><path d="M1334 314 L1338 310 M1338 310 L1335 310 M1338 310 L1338 313" stroke="#000" stroke-width="1"/>
<path d="M1370 302 a6 6 0 1 1 -1 14 M1368 311 L1367 317 L1372 316" stroke="#000" stroke-width="2" fill="none"/>
<rect x="1294" y="334" width="9" height="9" fill="#f01010"/><circle cx="1298.5" cy="338.5" r="2.5" fill="#d4d4d4"/><rect x="1279" y="351" width="9" height="9" fill="none" stroke="#1030e0" stroke-width="1.3"/><circle cx="1283.5" cy="355.5" r="2.5" fill="#1030e0"/><path d="M1290 349 L1293 346" stroke="#000" stroke-width="1"/>
<path d="M1320 348.5 L1343 348.5" stroke="#f01010" stroke-width="3"/><path d="M1329 348.5 L1335 348.5" stroke="#1030e0" stroke-width="3"/>
<path d="M1361 339 L1361 361" stroke="#000" stroke-width="1.2"/><rect x="1370" y="344" width="8" height="9" fill="none" stroke="#1030e0" stroke-width="1"/><path d="M1362 348.5 L1370 348.5 M1362 348.5 l3 -2 M1362 348.5 l3 2" stroke="#1030e0" stroke-width="1"/>
<path d="M1281 396 L1294 383 L1301 396 Z" stroke="#f01010" stroke-width="2.2" fill="none"/><path d="M1281 395 L1301 395" stroke="#1030e0" stroke-width="2.5"/><path d="M1292 391 L1292 387 M1290 389 L1292 386 L1294 389" stroke="#000" stroke-width="1.2" fill="none"/>
<path d="M1320 402 L1332 376 L1344 402" stroke="#f01010" stroke-width="2" fill="none"/><path d="M1322 402 L1332 392 L1342 402" stroke="#1030e0" stroke-width="2.5" fill="none"/><path d="M1332 390 L1332 385 M1330 387 L1332 384 L1334 387" stroke="#000" stroke-width="1.2" fill="none"/>
<path d="M1358 396 L1368 379 L1378 379" stroke="#f01010" stroke-width="2.5" fill="none"/><path d="M1358 402 L1364 394 L1378 394" stroke="#1030e0" stroke-width="2.5" fill="none"/><path d="M1371 391 L1371 385 M1369 387 L1371 384 L1373 387" stroke="#000" stroke-width="1.2" fill="none"/>
<path d="M1287 418 L1287 433 L1290.5 429.5 L1294 436 L1296 435 L1293 428.5 L1297 428 Z" fill="#000"/>
<rect x="1320" y="416" width="23" height="23" fill="none" stroke="#e01010" stroke-width="2"/><path d="M1327 418 L1327 433 L1330.5 429.5 L1334 436 L1336 435 L1333 428.5 L1337 428 Z" fill="#000"/>
<path d="M1363 416 L1378 416 M1363 416 L1358 421 L1358 434 L1363 439 L1378 439" stroke="#e01010" stroke-width="2" fill="none"/><path d="M1367 418 L1367 433 L1370.5 429.5 L1374 436 L1376 435 L1373 428.5 L1377 428 Z" fill="#000"/>
<rect x="1272" y="534.5" width="106" height="102" fill="#ff0000" />
<path d="M1272.5 549.5 L1378 549.5 M1272.5 621 L1378 621 M1272.5 549.5 L1272.5 621" stroke="#ff9020" stroke-width="0.8" fill="none"/>
<path d="M1299 554.5 L1369.5 554.5 L1369.5 587 L1367 588 L1365 594.5 L1349 594.5 L1348 590 L1319 590 L1318 594.5 L1301.5 594.5 L1300.5 588 L1297.5 586 L1297.5 556 Z" stroke="#50e8f0" stroke-width="2" fill="none"/><path d="M1369.5 556 L1369.5 587 M1319 590 L1348 590 M1297.5 558 L1297.5 585" stroke="#a8a8a8" stroke-width="2" fill="none"/>
<path d="M1295 593 L1301 599 M1301 593 L1295 599" stroke="#e0e0e0" stroke-width="0.8"/>
<rect x="1270" y="717.5" width="108" height="45" fill="#55cdad" />
<rect x="1270" y="717.5" width="108" height="2" fill="#b4f6e6" />
<rect x="1270" y="719.5" width="108" height="1.5" fill="#2e7062" />
<rect x="1270" y="717.5" width="1.5" height="45" fill="#2e7062" />
<rect x="1270" y="761" width="108" height="1.5" fill="#b4f6e6" />
<text x="1275" y="738" font-family="Liberation Mono" font-size="15" font-weight="bold" fill="#000" stroke="#000" stroke-width="0.3">X = 262.0730</text>
<text x="1275" y="753" font-family="Liberation Mono" font-size="15" font-weight="bold" fill="#000" stroke="#000" stroke-width="0.3">Y = -76.5525</text>
<svg x="149" y="43" width="1121" height="719" viewBox="149 43 1121 719">
<circle cx="312.5" cy="497.8" r="7.5" fill="none" stroke="#e81c1c" stroke-width="1.1"/>
<circle cx="843" cy="498.5" r="8.2" fill="none" stroke="#e81c1c" stroke-width="1.1"/>
<circle cx="829.3" cy="260" r="2" fill="#e81c1c"/>
<path d="M852 239 l-6 -2.5 v5 z M852 281.5 l-6 -2.5 v5 z" fill="#e81c1c"/>
<circle cx="501.6" cy="426.5" r="2" fill="none" stroke="#e81c1c"/>
<path d="M1011.3 224.2L1022.7 224.2L1022.7 259.6L1019.0 259.6L1011.3 250.0L1011.3 224.2M1011.3 311.0L1022.7 311.0L1022.7 274.8L1019.0 274.8L1011.3 284.0L1011.3 311.0M1011.3 236.0L1022.7 227.0M1011.3 294.0L1022.7 285.0M1011.3 245.0L1022.7 236.0M1011.3 302.0L1022.7 293.0M1011.3 254.0L1022.7 245.0M1011.3 310.0L1022.7 301.0M994.4 228.8L1019.4 258.0M994.4 306.0L1019.4 275.0M994.4 228.8 Q962 267 994.4 306M1011.3 198.5L1011.3 224.2M1018.4 198.5L1018.4 224.2M1002.0 202.2L1039.6 202.2M1022.7 258.4L1041.0 258.4M1022.7 274.8L1041.0 274.8M1037.0 258.4L1037.0 274.8M1037.0 258.4L1038.6 244.4L1047.5 244.4" stroke="#e81c1c" stroke-width="0.95" fill="none"/>
<path d="M994.4 228.8 l-4.5 2.5 l2 2.5 z M994.4 306 l-4.5 -2.5 l2 -2.5 zM1011.3 202.2 l-5 -2 v4 z M1018.4 202.2 l5 -2 v4 zM1037 258.4 l-2 5 h4 z M1037 274.8 l-2 -5 h4 z" fill="#e81c1c"/>
<circle cx="1057" cy="245.5" r="3.3" fill="none" stroke="#e81c1c" stroke-width="1"/>
<path d="M1054 250 L1060 241" stroke="#e81c1c" stroke-width="1"/>
<path d="M965 503 L971 503 L973.5 506 L972 510 L969 512 L966 511 L963.5 508 Z M965 503 L968 507 L971 503" stroke="#e81c1c" fill="none" stroke-width="1"/>
<path d="M962 522 Q962 516 967.5 516 Q973 516 973 522" stroke="#e81c1c" fill="none" stroke-width="1"/>
<path d="M334.7 194.4L836.5 194.4L839.8 197.5L839.8 435.5L836.7 438.5L800.0 438.5L797.3 441.5L797.3 473.5L794.5 476.3L693.0 476.3L690.0 473.0L690.0 441.0L687.0 438.5L484.0 438.5L480.6 441.5L480.6 473.5L477.5 476.5L366.0 476.5L362.8 473.5L362.8 420.5L359.5 417.3L334.7 417.3M334.7 194.4L334.7 631.0M201.8 194.7L334.7 194.7M213.2 195.0L213.2 299.5M213.2 371.6L213.2 477.0M223.0 417.2L334.7 417.2M202.0 477.0L334.7 477.0M234.6 383.0L234.6 417.0M234.6 477.0L234.6 509.0M301.0 435.0L334.7 435.0M301.0 456.0L334.7 456.0M301.0 480.7L334.7 480.7M338.2 419.0L338.2 446.0M338.2 435.0L371.7 435.0M362.8 456.0L395.6 456.0M367.2 481.0L399.0 481.0M366.2 477.0L366.2 491.0M300.0 497.8L325.0 497.8M312.5 486.0L312.5 510.0M334.7 500.3L370.6 500.3M441.5 500.3L477.0 500.3M334.7 519.0L372.0 519.0M443.0 519.0L480.0 519.0M334.7 538.2L470.8 538.2M552.9 538.2L689.3 538.2M334.7 554.0L473.0 554.0M555.0 554.0L692.5 554.0M334.7 569.0L523.9 569.0M605.0 569.0L794.0 569.0M334.7 586.5L525.3 586.5M607.5 586.5L797.3 586.5M334.7 601.3L544.2 601.3M626.0 601.3L835.0 601.3M334.7 620.2L540.7 620.2M632.7 620.2L838.8 620.2M477.0 445.0L477.0 530.0M480.6 476.0L480.6 545.0M689.3 476.0L689.3 545.0M693.0 476.0L693.0 565.0M794.0 476.0L794.0 580.0M797.3 476.0L797.3 597.0M835.0 437.0L835.0 612.0M839.8 434.0L839.8 631.0M840.9 435.2L875.0 435.2M836.7 438.5L859.0 438.5M797.0 476.3L875.0 476.3M847.0 404.8L847.0 438.5M863.0 402.0L863.0 435.2M847.0 476.3L847.0 510.0M863.0 476.3L863.0 510.0M812.0 438.5L812.0 470.6M799.7 472.2L823.6 472.2M812.0 476.3L812.0 509.0M829.0 498.5L856.5 498.5M843.0 485.4L843.0 511.7M850.0 239.0L829.3 239.0L829.3 281.5L850.0 281.5M501.6 428.0L501.6 518.0L677.0 518.0M485.5 441.0L494.0 456.5L508.2 456.5M963.0 471.0L973.0 471.0L963.0 480.5L973.0 480.5L963.0 471.0M962.5 491.3L974.5 491.3M968.5 485.5L968.5 497.0M961.5 522.0L973.5 522.0M967.5 517.0L967.5 528.0" stroke="#e81c1c" stroke-width="1.1" fill="none"/>
<path d="M893.1 452.1V576.2M937.6 452.1V576.2M986.2 452.1V576.2M1046.6 452.1V576.2M1127.3 452.1V576.2M1174.2 452.1V576.2M1219.3 452.1V576.2M893.1 452.1H1219.3M893.1 468.1H1219.3M893.1 483.7H1219.3M893.1 499H1219.3M893.1 514.5H1219.3M893.1 530.3H1219.3M893.1 545.4H1219.3M893.1 561.2H1219.3M893.1 576.2H1219.3" stroke="#e81c1c" stroke-width="1.6" fill="none"/>
<path d="M214.2 358.0L212.1 360.0L210.1 360.0L208.0 358.0L208.0 354.1L210.1 352.2L212.1 352.2L214.2 354.1L214.2 358.0L216.3 360.0L218.3 360.0L220.4 358.0L220.4 354.1L218.3 352.2L216.3 352.2L214.2 354.1M210.3 348.4L208.0 346.2L220.4 346.2M220.4 348.6L220.4 343.9M220.4 337.4L220.4 335.4L218.3 335.4L218.3 337.4L220.4 337.4M220.4 328.5L220.4 324.6L218.3 322.6L210.1 322.6L208.0 324.6L208.0 328.5L210.1 330.5L218.3 330.5L220.4 328.5M217.7 329.9L210.7 323.2M220.4 318.7L220.4 314.8L218.3 312.8L210.1 312.8L208.0 314.8L208.0 318.7L210.1 320.6L218.3 320.6L220.4 318.7M217.7 320.0L210.7 313.4M230.7 369.4L229.0 367.7L238.5 367.7M238.5 369.5L238.5 365.9M229.0 360.8L229.0 354.8L230.6 354.8L238.5 358.5M238.5 348.6L238.5 347.1L236.9 347.1L236.9 348.6L238.5 348.6M238.5 339.4L238.5 336.4L236.9 334.9L230.6 334.9L229.0 336.4L229.0 339.4L230.6 340.9L236.9 340.9L238.5 339.4M236.4 340.5L231.1 335.4M238.5 329.5L238.5 326.5L236.9 325.0L230.6 325.0L229.0 326.5L229.0 329.5L230.6 331.0L236.9 331.0L238.5 329.5M236.4 330.5L231.1 325.4M260.6 431.5L262.6 429.4L262.6 440.9M260.4 440.9L264.8 440.9M271.4 440.9L273.2 440.9L273.2 439.0L271.4 439.0L271.4 440.9M280.2 440.9L283.9 440.9L285.7 439.0L285.7 431.3L283.9 429.4L280.2 429.4L278.4 431.3L278.4 439.0L280.2 440.9M279.0 438.4L285.1 431.9M290.0 440.9L293.6 440.9L295.4 439.0L295.4 431.3L293.6 429.4L290.0 429.4L288.2 431.3L288.2 439.0L290.0 440.9M288.7 438.4L294.9 431.9M258.3 455.8L256.5 453.8L256.5 451.9L258.3 450.0L261.9 450.0L263.7 451.9L263.7 453.8L261.9 455.8L258.3 455.8L256.5 457.7L256.5 459.6L258.3 461.5L261.9 461.5L263.7 459.6L263.7 457.7L261.9 455.8M269.3 461.5L271.1 461.5L271.1 459.6L269.3 459.6L269.3 461.5M278.5 461.5L282.1 461.5L283.9 459.6L283.9 451.9L282.1 450.0L278.5 450.0L276.7 451.9L276.7 459.6L278.5 461.5M277.2 459.0L283.4 452.5M288.6 461.5L292.2 461.5L294.0 459.6L294.0 451.9L292.2 450.0L288.6 450.0L286.8 451.9L286.8 459.6L288.6 461.5M287.3 459.0L293.5 452.5M264.2 486.5L258.8 486.5L257.0 484.6L257.0 481.7L258.8 479.8L262.4 479.8L264.2 481.7L264.2 489.4L262.4 491.3L257.9 491.3M270.0 491.3L271.8 491.3L271.8 489.4L270.0 489.4L270.0 491.3M279.3 491.3L282.9 491.3L284.7 489.4L284.7 481.7L282.9 479.8L279.3 479.8L277.5 481.7L277.5 489.4L279.3 491.3M278.0 488.8L284.2 482.3M289.6 491.3L293.2 491.3L295.0 489.4L295.0 481.7L293.2 479.8L289.6 479.8L287.8 481.7L287.8 489.4L289.6 491.3M288.3 488.8L294.5 482.3M386.3 506.8L386.3 495.0L380.7 502.9L388.1 502.9M392.4 497.2L394.5 495.0L394.5 506.8M392.3 506.8L396.7 506.8M403.6 506.8L405.5 506.8L405.5 504.8L403.6 504.8L403.6 506.8M412.8 506.8L416.5 506.8L418.3 504.8L418.3 497.0L416.5 495.0L412.8 495.0L410.9 497.0L410.9 504.8L412.8 506.8M411.5 504.2L417.8 497.6M422.8 506.8L426.5 506.8L428.4 504.8L428.4 497.0L426.5 495.0L422.8 495.0L421.0 497.0L421.0 504.8L422.8 506.8M421.5 504.2L427.8 497.6M388.4 525.2L388.4 513.4L382.8 521.3L390.2 521.3M392.5 515.4L394.4 513.4L398.1 513.4L399.9 515.4L399.9 517.3L392.5 525.2L399.9 525.2M405.0 525.2L406.8 525.2L406.8 523.2L405.0 523.2L405.0 525.2M413.7 525.2L417.4 525.2L419.3 523.2L419.3 515.4L417.4 513.4L413.7 513.4L411.9 515.4L411.9 523.2L413.7 525.2M412.4 522.6L418.8 516.0M423.4 525.2L427.1 525.2L429.0 523.2L429.0 515.4L427.1 513.4L423.4 513.4L421.6 515.4L421.6 523.2L423.4 525.2M422.1 522.6L428.4 516.0M484.3 534.5L486.3 532.3L486.3 544.1M484.1 544.1L488.5 544.1M494.1 544.1L497.8 544.1L499.7 542.1L499.7 534.3L497.8 532.3L494.1 532.3L492.3 534.3L492.3 542.1L494.1 544.1M492.8 541.5L499.1 534.9M501.9 534.3L503.8 532.3L507.5 532.3L509.4 534.3L509.4 536.2L501.9 544.1L509.4 544.1M514.4 544.1L516.3 544.1L516.3 542.1L514.4 542.1L514.4 544.1M523.2 544.1L526.9 544.1L528.7 542.1L528.7 534.3L526.9 532.3L523.2 532.3L521.3 534.3L521.3 542.1L523.2 544.1M521.9 541.5L528.2 534.9M532.8 544.1L536.5 544.1L538.4 542.1L538.4 534.3L536.5 532.3L532.8 532.3L531.0 534.3L531.0 542.1L532.8 544.1M531.5 541.5L537.8 534.9M486.4 550.2L488.4 548.0L488.4 559.8M486.2 559.8L490.6 559.8M496.2 559.8L499.9 559.8L501.8 557.8L501.8 550.0L499.9 548.0L496.2 548.0L494.4 550.0L494.4 557.8L496.2 559.8M494.9 557.2L501.2 550.6M504.0 550.0L505.9 548.0L509.6 548.0L511.4 550.0L511.4 551.9L509.6 553.9L511.4 555.9L511.4 557.8L509.6 559.8L505.9 559.8L504.0 557.8M506.8 553.9L509.6 553.9M516.4 559.8L518.3 559.8L518.3 557.8L516.4 557.8L516.4 559.8M525.2 559.8L528.9 559.8L530.7 557.8L530.7 550.0L528.9 548.0L525.2 548.0L523.3 550.0L523.3 557.8L525.2 559.8M523.9 557.2L530.2 550.6M534.8 559.8L538.5 559.8L540.4 557.8L540.4 550.0L538.5 548.0L534.8 548.0L533.0 550.0L533.0 557.8L534.8 559.8M533.5 557.2L539.8 550.6M536.6 565.8L538.6 563.6L538.6 575.4M536.4 575.4L540.8 575.4M544.6 565.6L546.4 563.6L550.1 563.6L552.0 565.6L552.0 567.5L550.1 569.5L552.0 571.5L552.0 573.4L550.1 575.4L546.4 575.4L544.6 573.4M547.3 569.5L550.1 569.5M554.2 565.6L556.1 563.6L559.8 563.6L561.6 565.6L561.6 567.5L554.2 575.4L561.6 575.4M566.6 575.4L568.5 575.4L568.5 573.4L566.6 573.4L566.6 575.4M575.4 575.4L579.1 575.4L580.9 573.4L580.9 565.6L579.1 563.6L575.4 563.6L573.5 565.6L573.5 573.4L575.4 575.4M574.1 572.8L580.4 566.2M585.0 575.4L588.7 575.4L590.6 573.4L590.6 565.6L588.7 563.6L585.0 563.6L583.2 565.6L583.2 573.4L585.0 575.4M583.7 572.8L590.0 566.2M538.7 582.9L540.7 580.7L540.7 592.5M538.5 592.5L542.9 592.5M546.7 582.7L548.5 580.7L552.2 580.7L554.1 582.7L554.1 584.6L552.2 586.6L554.1 588.6L554.1 590.5L552.2 592.5L548.5 592.5L546.7 590.5M549.4 586.6L552.2 586.6M556.3 582.7L558.2 580.7L561.9 580.7L563.7 582.7L563.7 584.6L561.9 586.6L563.7 588.6L563.7 590.5L561.9 592.5L558.2 592.5L556.3 590.5M559.1 586.6L561.9 586.6M568.7 592.5L570.6 592.5L570.6 590.5L568.7 590.5L568.7 592.5M577.5 592.5L581.2 592.5L583.0 590.5L583.0 582.7L581.2 580.7L577.5 580.7L575.6 582.7L575.6 590.5L577.5 592.5M576.2 589.9L582.5 583.3M587.1 592.5L590.8 592.5L592.7 590.5L592.7 582.7L590.8 580.7L587.1 580.7L585.3 582.7L585.3 590.5L587.1 592.5M585.8 589.9L592.1 583.3M557.5 598.2L559.5 596.0L559.5 607.8M557.3 607.8L561.7 607.8M571.0 607.8L571.0 596.0L565.5 603.9L572.9 603.9M580.7 607.8L580.7 596.0L575.1 603.9L582.5 603.9M587.5 607.8L589.4 607.8L589.4 605.8L587.5 605.8L587.5 607.8M596.3 607.8L600.0 607.8L601.8 605.8L601.8 598.0L600.0 596.0L596.3 596.0L594.4 598.0L594.4 605.8L596.3 607.8M595.0 605.2L601.3 598.6M605.9 607.8L609.6 607.8L611.5 605.8L611.5 598.0L609.6 596.0L605.9 596.0L604.1 598.0L604.1 605.8L605.9 607.8M604.6 605.2L610.9 598.6M548.7 616.6L550.7 614.4L550.7 626.2M548.5 626.2L552.9 626.2M561.1 626.2L561.1 614.4L555.5 622.3L563.0 622.3M571.5 614.4L564.6 614.4L564.6 619.3L569.6 619.3L571.5 621.3L571.5 624.2L569.6 626.2L565.9 626.2L564.0 624.2M575.4 626.2L577.2 626.2L577.2 624.2L575.4 624.2L575.4 626.2M587.9 617.3L587.9 613.8M585.9 615.6L589.9 615.6M585.9 620.9L589.9 620.9M600.4 626.2L604.1 626.2L605.9 624.2L605.9 616.4L604.1 614.4L600.4 614.4L598.5 616.4L598.5 624.2L600.4 626.2M599.1 623.6L605.4 617.0M608.6 616.4L610.4 614.4L614.1 614.4L616.0 616.4L616.0 618.3L608.6 626.2L616.0 626.2M860.8 388.2L858.5 386.1L871.0 386.1M871.0 388.4L871.0 383.7M860.8 378.4L858.5 376.3L871.0 376.3M871.0 378.6L871.0 373.9M871.0 367.5L871.0 365.5L868.9 365.5L868.9 367.5L871.0 367.5M864.8 358.7L862.7 360.7L860.6 360.7L858.5 358.7L858.5 354.8L860.6 352.8L862.7 352.8L864.8 354.8L864.8 358.7L866.8 360.7L868.9 360.7L871.0 358.7L871.0 354.8L868.9 352.8L866.8 352.8L864.8 354.8M871.0 348.9L871.0 345.0L868.9 343.0L860.6 343.0L858.5 345.0L858.5 348.9L860.6 350.9L868.9 350.9L871.0 348.9M868.3 350.3L861.2 343.6M845.8 561.2L843.5 559.1L856.0 559.1M856.0 561.4L856.0 556.7M856.0 551.5L856.0 547.6L853.9 545.6L845.6 545.6L843.5 547.6L843.5 551.5L845.6 553.5L853.9 553.5L856.0 551.5M853.3 552.9L846.2 546.2M856.0 541.0L856.0 539.0L853.9 539.0L853.9 541.0L856.0 541.0M849.8 532.4L847.7 534.4L845.6 534.4L843.5 532.4L843.5 528.5L845.6 526.5L847.7 526.5L849.8 528.5L849.8 532.4L851.8 534.4L853.9 534.4L856.0 532.4L856.0 528.5L853.9 526.5L851.8 526.5L849.8 528.5M856.0 522.9L856.0 519.0L853.9 517.0L845.6 517.0L843.5 519.0L843.5 522.9L845.6 524.9L853.9 524.9L856.0 522.9M853.3 524.3L846.2 517.6M807.8 547.7L805.5 545.6L818.0 545.6M818.0 547.9L818.0 543.2M818.0 537.7L818.0 535.7L815.9 535.7L815.9 537.7L818.0 537.7M818.0 529.8L818.0 525.8L815.9 523.9L807.6 523.9L805.5 525.8L805.5 529.8L807.6 531.8L815.9 531.8L818.0 529.8M815.3 531.2L808.2 524.5M818.0 520.9L818.0 517.0L815.9 515.0L807.6 515.0L805.5 517.0L805.5 520.9L807.6 522.9L815.9 522.9L818.0 520.9M815.3 522.3L808.2 515.6M854.0 243.4L854.0 235.2L855.5 233.6L858.6 233.6L860.2 235.2L860.2 243.4M854.0 238.5L860.2 238.5M854.0 274.0L854.0 265.8L855.5 264.2L858.6 264.2L860.2 265.8L860.2 274.0M854.0 269.1L860.2 269.1M573.5 175.9L567.1 175.9L567.1 186.1M567.1 181.0L571.9 181.0M574.6 186.1L574.6 177.6L576.2 175.9L579.4 175.9L581.0 177.6L581.0 186.1M574.6 181.0L581.0 181.0M588.5 177.6L586.9 175.9L583.7 175.9L582.1 177.6L582.1 184.4L583.7 186.1L586.9 186.1L588.5 184.4M596.0 175.9L589.6 175.9L589.6 186.1L596.0 186.1M589.6 181.0L594.4 181.0M604.6 186.1L604.6 175.9L609.4 175.9L611.0 177.6L611.0 179.3L609.4 181.0L604.6 181.0M609.4 181.0L611.0 182.7L611.0 184.4L609.4 186.1L604.6 186.1M613.7 186.1L616.9 186.1L618.5 184.4L618.5 177.6L616.9 175.9L613.7 175.9L612.1 177.6L612.1 184.4L613.7 186.1M619.6 186.1L619.6 177.6L621.2 175.9L624.4 175.9L626.0 177.6L626.0 186.1M619.6 181.0L626.0 181.0M627.1 186.1L627.1 175.9L631.9 175.9L633.5 177.6L633.5 179.3L631.9 181.0L627.1 181.0M630.3 181.0L633.5 186.1M634.6 186.1L634.6 175.9L639.4 175.9L641.0 177.6L641.0 184.4L639.4 186.1L634.6 186.1M654.4 175.9L652.0 178.4L652.0 183.5L654.4 186.1M664.6 186.1L664.6 175.9L667.8 181.0L671.0 175.9L671.0 186.1M678.5 175.9L672.1 175.9L672.1 186.1L678.5 186.1M672.1 181.0L676.9 181.0M679.6 186.1L679.6 175.9L684.4 175.9L686.0 177.6L686.0 179.3L684.4 181.0L679.6 181.0M682.8 181.0L686.0 186.1M701.0 186.1L696.2 179.3L696.2 177.6L697.8 175.9L699.4 177.6L699.4 179.3L694.6 182.7L694.6 184.4L696.2 186.1L697.8 186.1L701.0 182.7M716.0 177.6L714.4 175.9L711.2 175.9L709.6 177.6L709.6 184.4L711.2 186.1L714.4 186.1L716.0 184.4M718.7 186.1L721.9 186.1L723.5 184.4L723.5 181.0L721.9 179.3L718.7 179.3L717.1 181.0L717.1 184.4L718.7 186.1M733.7 175.9L736.1 178.4L736.1 183.5L733.7 186.1M768.0 186.1L768.0 175.9L772.8 175.9L774.4 177.6L774.4 184.4L772.8 186.1L768.0 186.1M775.3 186.1L775.3 175.9L780.2 175.9L781.8 177.6L781.8 179.3L780.2 181.0L775.3 181.0M778.6 181.0L781.8 186.1M784.3 175.9L787.5 175.9M785.9 175.9L785.9 186.1M784.3 186.1L787.5 186.1M790.0 175.9L790.0 186.1L796.5 186.1M797.4 175.9L797.4 186.1L803.8 186.1M522.1 452.4L524.1 450.3L524.1 461.8M521.9 461.8L526.3 461.8M533.3 461.8L535.1 461.8L535.1 459.9L533.3 459.9L533.3 461.8M547.8 450.3L541.1 450.3L541.1 455.1L546.0 455.1L547.8 457.0L547.8 459.9L546.0 461.8L542.4 461.8L540.6 459.9M552.5 461.8L556.1 461.8L557.9 459.9L557.9 452.2L556.1 450.3L552.5 450.3L550.7 452.2L550.7 459.9L552.5 461.8M551.2 459.3L557.4 452.8M570.8 461.8L570.8 450.3L576.2 450.3L578.0 452.2L578.0 454.1L576.2 456.1L570.8 456.1M574.4 456.1L578.0 461.8M534.7 467.1L541.9 467.1M538.3 467.1L538.3 478.6M543.4 467.1L547.0 472.9L550.6 467.1M547.0 472.9L547.0 478.6M552.1 478.6L552.1 467.1L557.5 467.1L559.3 469.0L559.3 470.9L557.5 472.9L552.1 472.9M563.5 478.6L565.3 478.6L565.3 476.7L563.5 476.7L563.5 478.6M509.4 513.8L509.4 504.0L514.0 504.0L515.6 505.6L515.6 512.2L514.0 513.8L509.4 513.8M516.9 513.8L516.9 505.6L518.4 504.0L521.5 504.0L523.1 505.6L523.1 513.8M516.9 508.9L523.1 508.9M524.4 504.0L530.6 504.0M527.5 504.0L527.5 513.8M531.9 504.0L531.9 512.2L533.5 513.8L536.5 513.8L538.1 512.2L538.1 504.0M539.4 513.8L539.4 504.0L542.5 508.9L545.6 504.0L545.6 513.8M554.4 513.8L560.6 504.0M554.4 504.0L560.6 513.8M561.9 510.5L568.1 510.5M561.9 507.3L568.1 507.3M574.1 513.8L574.1 504.0L569.5 510.5L575.6 510.5M577.0 504.0L583.1 504.0L583.1 505.6L579.3 513.8M586.8 513.8L588.3 513.8L588.3 512.2L586.8 512.2L586.8 513.8M593.5 508.9L592.0 507.3L592.0 505.6L593.5 504.0L596.6 504.0L598.1 505.6L598.1 507.3L596.6 508.9L593.5 508.9L592.0 510.5L592.0 512.2L593.5 513.8L596.6 513.8L598.1 512.2L598.1 510.5L596.6 508.9M599.5 504.0L605.6 504.0L605.6 505.6L601.8 513.8M610.1 512.2L608.5 515.4M614.5 504.0L617.6 508.9L620.7 504.0M617.6 508.9L617.6 513.8M622.0 510.5L628.2 510.5M622.0 507.3L628.2 507.3M630.9 505.8L632.6 504.0L632.6 513.8M630.7 513.8L634.4 513.8M637.0 505.6L638.6 504.0L641.6 504.0L643.2 505.6L643.2 507.3L641.6 508.9L643.2 510.5L643.2 512.2L641.6 513.8L638.6 513.8L637.0 512.2M639.3 508.9L641.6 508.9M646.8 513.8L648.4 513.8L648.4 512.2L646.8 512.2L646.8 513.8M658.2 504.0L652.5 504.0L652.5 508.1L656.7 508.1L658.2 509.7L658.2 512.2L656.7 513.8L653.6 513.8L652.0 512.2M664.9 504.0L661.1 504.0L659.5 505.6L659.5 512.2L661.1 513.8L664.2 513.8L665.7 512.2L665.7 509.7L664.2 508.1L659.5 508.1M998.5 438.0L998.5 428.6L1002.9 428.6L1004.4 430.2L1004.4 436.4L1002.9 438.0L998.5 438.0M1005.8 438.0L1005.8 428.6L1010.3 428.6L1011.7 430.2L1011.7 431.7L1010.3 433.3L1005.8 433.3M1008.8 433.3L1011.7 438.0M1014.6 428.6L1017.6 428.6M1016.1 428.6L1016.1 438.0M1014.6 438.0L1017.6 438.0M1020.5 428.6L1020.5 438.0L1026.4 438.0M1027.8 428.6L1027.8 438.0L1033.7 438.0M1042.4 428.6L1048.4 428.6M1045.4 428.6L1045.4 438.0M1049.8 438.0L1049.8 430.2L1051.2 428.6L1054.2 428.6L1055.7 430.2L1055.7 438.0M1049.8 433.3L1055.7 433.3M1057.1 438.0L1057.1 428.6L1061.5 428.6L1063.0 430.2L1063.0 431.7L1061.5 433.3L1057.1 433.3M1061.5 433.3L1063.0 434.9L1063.0 436.4L1061.5 438.0L1057.1 438.0M1064.4 428.6L1064.4 438.0L1070.3 438.0M1077.7 428.6L1071.7 428.6L1071.7 438.0L1077.7 438.0M1071.7 433.3L1076.2 433.3M1088.6 438.0L1090.1 438.0L1090.1 436.4L1088.6 436.4L1088.6 438.0M1088.6 431.7L1090.1 431.7L1090.1 430.2L1088.6 430.2L1088.6 431.7" stroke="#e81c1c" stroke-width="1.0" fill="none" stroke-linejoin="round"/>
<path d="M320.8 489.0L322.4 489.0L323.1 488.2L323.1 484.8L322.4 484.0L320.8 484.0L320.0 484.8L320.0 488.2L320.8 489.0M320.2 487.9L322.9 485.1M324.5 489.0L327.6 484.0M329.8 489.0L331.4 489.0L332.1 488.2L332.1 484.8L331.4 484.0L329.8 484.0L329.0 484.8L329.0 488.2L329.8 489.0M329.2 487.9L331.9 485.1M993.9 200.2L995.0 199.0L995.0 205.5M993.8 205.5L996.3 205.5M968.6 264.6L969.7 263.4L969.7 269.7M968.5 269.7L970.9 269.7M972.9 269.7L974.9 269.7L975.9 268.6L975.9 264.4L974.9 263.4L972.9 263.4L971.9 264.4L971.9 268.6L972.9 269.7M972.2 268.3L975.6 264.8M977.1 266.6L976.1 265.5L976.1 264.4L977.1 263.4L979.1 263.4L980.1 264.4L980.1 265.5L979.1 266.6L977.1 266.6L976.1 267.6L976.1 268.6L977.1 269.7L979.1 269.7L980.1 268.6L980.1 267.6L979.1 266.6M1063.0 243.2L1064.0 242.0L1066.1 242.0L1067.1 243.2L1067.1 244.5L1063.0 249.5L1067.1 249.5M1069.9 249.5L1070.9 249.5L1070.9 248.2L1069.9 248.2L1069.9 249.5M1073.7 243.2L1074.7 242.0L1076.8 242.0L1077.8 243.2L1077.8 244.5L1076.8 245.8L1077.8 247.0L1077.8 248.2L1076.8 249.5L1074.7 249.5L1073.7 248.2M1075.2 245.8L1076.8 245.8M1081.7 242.0L1081.7 238.0M1080.0 240.0L1083.3 240.0M1085.4 243.0L1087.0 243.0L1087.9 242.0L1087.9 238.0L1087.0 237.0L1085.4 237.0L1084.6 238.0L1084.6 242.0L1085.4 243.0M1084.8 241.7L1087.6 238.3M1090.4 243.0L1091.2 243.0L1091.2 242.0L1090.4 242.0L1090.4 243.0M1094.4 238.1L1095.3 237.0L1095.3 243.0M1094.4 243.0L1096.3 243.0M1084.9 251.0L1086.6 251.0L1087.5 250.1L1087.5 246.4L1086.6 245.5L1084.9 245.5L1084.0 246.4L1084.0 250.1L1084.9 251.0M1084.3 249.8L1087.2 246.7M1012.7 334.2L1011.1 336.1L1011.1 340.1L1012.7 342.0M1014.9 342.0L1018.2 336.8M1014.9 336.8L1018.2 342.0M1022.5 342.0L1022.5 334.2L1019.3 339.4L1023.6 339.4M1025.3 334.2L1026.9 336.1L1026.9 340.1L1025.3 342.0M996.5 363.2L995.5 362.0L993.5 362.0L992.5 363.2L992.5 364.4L993.5 365.6L995.5 365.6L996.5 366.8L996.5 368.0L995.5 369.2L993.5 369.2L992.5 368.0M1002.1 362.0L998.1 362.0L998.1 369.2L1002.1 369.2M998.1 365.6L1001.1 365.6M1007.7 363.2L1006.7 362.0L1004.7 362.0L1003.7 363.2L1003.7 368.0L1004.7 369.2L1006.7 369.2L1007.7 368.0M1009.3 362.0L1013.3 362.0M1011.3 362.0L1011.3 369.2M1015.9 362.0L1017.9 362.0M1016.9 362.0L1016.9 369.2M1015.9 369.2L1017.9 369.2M1021.5 369.2L1023.5 369.2L1024.5 368.0L1024.5 363.2L1023.5 362.0L1021.5 362.0L1020.5 363.2L1020.5 368.0L1021.5 369.2M1026.1 369.2L1026.1 362.0L1030.1 369.2L1030.1 362.0M1037.3 369.2L1037.3 363.2L1038.3 362.0L1040.3 362.0L1041.3 363.2L1041.3 369.2M1037.3 365.6L1041.3 365.6M1043.4 365.6L1046.4 365.6M1048.5 369.2L1048.5 363.2L1049.5 362.0L1051.5 362.0L1052.5 363.2L1052.5 369.2M1048.5 365.6L1052.5 365.6M996.5 375.4L995.5 374.2L993.5 374.2L992.5 375.4L992.5 376.6L993.5 377.8L995.5 377.8L996.5 379.0L996.5 380.2L995.5 381.4L993.5 381.4L992.5 380.2M1001.9 375.4L1000.9 374.2L998.9 374.2L998.0 375.4L998.0 380.2L998.9 381.4L1000.9 381.4L1001.9 380.2M1003.4 381.4L1003.4 375.4L1004.4 374.2L1006.4 374.2L1007.4 375.4L1007.4 381.4M1003.4 377.8L1007.4 377.8M1008.9 374.2L1008.9 381.4L1012.8 381.4M1018.3 374.2L1014.3 374.2L1014.3 381.4L1018.3 381.4M1014.3 377.8L1017.3 377.8M1025.2 375.4L1026.2 374.2L1028.2 374.2L1029.2 375.4L1029.2 376.6L1025.2 381.4L1029.2 381.4M1037.6 381.4L1038.6 381.4L1038.6 380.2L1037.6 380.2L1037.6 381.4M1037.6 376.6L1038.6 376.6L1038.6 375.4L1037.6 375.4L1037.6 376.6M1047.9 375.5L1049.0 374.2L1049.0 381.4M1047.8 381.4L1050.2 381.4M903.5 465.8L903.5 458.0L909.1 465.8L909.1 458.0M910.1 465.8L910.1 459.3L911.5 458.0L914.3 458.0L915.7 459.3L915.7 465.8M910.1 461.9L915.7 461.9M916.8 465.8L916.8 458.0L919.6 461.9L922.4 458.0L922.4 465.8M929.0 458.0L923.4 458.0L923.4 465.8L929.0 465.8M923.4 461.9L927.6 461.9M949.6 458.0L955.2 458.0M952.4 458.0L952.4 465.8M957.6 465.8L960.4 465.8L961.8 464.5L961.8 459.3L960.4 458.0L957.6 458.0L956.2 459.3L956.2 464.5L957.6 465.8M964.2 465.8L967.0 465.8L968.4 464.5L968.4 459.3L967.0 458.0L964.2 458.0L962.8 459.3L962.8 464.5L964.2 465.8M969.4 458.0L969.4 465.8L975.0 465.8M1007.8 459.3L1006.4 458.0L1003.6 458.0L1002.2 459.3L1002.2 460.6L1003.6 461.9L1006.4 461.9L1007.8 463.2L1007.8 464.5L1006.4 465.8L1003.6 465.8L1002.2 464.5M1010.2 458.0L1013.0 458.0M1011.6 458.0L1011.6 465.8M1010.2 465.8L1013.0 465.8M1015.4 458.0L1021.0 458.0L1015.4 465.8L1021.0 465.8M1027.6 458.0L1022.0 458.0L1022.0 465.8L1027.6 465.8M1022.0 461.9L1026.2 461.9M1062.6 458.0L1068.2 458.0M1065.4 458.0L1065.4 465.8M1070.1 465.8L1072.9 465.8L1074.3 464.5L1074.3 459.3L1072.9 458.0L1070.1 458.0L1068.7 459.3L1068.7 464.5L1070.1 465.8M1074.8 458.0L1074.8 465.8L1080.5 465.8M1086.6 458.0L1081.0 458.0L1081.0 465.8L1086.6 465.8M1081.0 461.9L1085.2 461.9M1087.1 465.8L1087.1 458.0L1091.3 458.0L1092.7 459.3L1092.7 460.6L1091.3 461.9L1087.1 461.9M1089.9 461.9L1092.7 465.8M1093.2 465.8L1093.2 459.3L1094.6 458.0L1097.4 458.0L1098.8 459.3L1098.8 465.8M1093.2 461.9L1098.8 461.9M1099.3 465.8L1099.3 458.0L1105.0 465.8L1105.0 458.0M1111.1 459.3L1109.7 458.0L1106.9 458.0L1105.5 459.3L1105.5 464.5L1106.9 465.8L1109.7 465.8L1111.1 464.5M1117.2 458.0L1111.6 458.0L1111.6 465.8L1117.2 465.8M1111.6 461.9L1115.8 461.9M1133.0 465.8L1133.0 458.0L1137.2 458.0L1138.6 459.3L1138.6 460.6L1137.2 461.9L1133.0 461.9M1139.3 458.0L1139.3 465.8L1144.9 465.8M1145.6 465.8L1145.6 459.3L1147.0 458.0L1149.8 458.0L1151.2 459.3L1151.2 465.8M1145.6 461.9L1151.2 461.9M1151.8 458.0L1157.4 458.0M1154.6 458.0L1154.6 465.8M1163.7 458.0L1158.1 458.0L1158.1 465.8L1163.7 465.8M1158.1 461.9L1162.3 461.9M1164.4 465.8L1164.4 458.0L1168.6 458.0L1170.0 459.3L1170.0 464.5L1168.6 465.8L1164.4 465.8M1185.9 459.3L1184.5 458.0L1181.7 458.0L1180.3 459.3L1180.3 464.5L1181.7 465.8L1184.5 465.8L1185.9 464.5M1187.9 465.8L1190.7 465.8L1192.1 464.5L1192.1 459.3L1190.7 458.0L1187.9 458.0L1186.5 459.3L1186.5 464.5L1187.9 465.8M1192.7 458.0L1192.7 464.5L1194.1 465.8L1196.9 465.8L1198.3 464.5L1198.3 458.0M1198.9 465.8L1198.9 458.0L1204.5 465.8L1204.5 458.0M1205.1 458.0L1210.7 458.0M1207.9 458.0L1207.9 465.8M916.3 480.4L916.3 471.2L910.9 477.3L918.1 477.3M925.6 476.6L920.2 476.6L918.4 475.0L918.4 472.7L920.2 471.2L923.8 471.2L925.6 472.7L925.6 478.9L923.8 480.4L919.3 480.4M1007.7 480.4L1011.3 480.4L1013.1 478.9L1013.1 472.7L1011.3 471.2L1007.7 471.2L1005.9 472.7L1005.9 478.9L1007.7 480.4M1006.4 478.4L1012.5 473.2M1016.1 480.4L1017.9 480.4L1017.9 478.9L1016.1 478.9L1016.1 480.4M1020.9 472.7L1022.7 471.2L1026.3 471.2L1028.1 472.7L1028.1 474.3L1026.3 475.8L1028.1 477.3L1028.1 478.9L1026.3 480.4L1022.7 480.4L1020.9 478.9M1023.6 475.8L1026.3 475.8M1030.2 480.4L1033.8 480.4L1035.6 478.9L1035.6 472.7L1033.8 471.2L1030.2 471.2L1028.4 472.7L1028.4 478.9L1030.2 480.4M1028.9 478.4L1035.0 473.2M1061.3 478.9L1061.3 472.7M1057.7 475.8L1064.9 475.8M1065.2 480.4L1072.4 471.2M1073.6 475.8L1079.0 475.8M1082.0 480.4L1085.6 480.4L1087.4 478.9L1087.4 472.7L1085.6 471.2L1082.0 471.2L1080.2 472.7L1080.2 478.9L1082.0 480.4M1080.7 478.4L1086.8 473.2M1090.4 480.4L1092.2 480.4L1092.2 478.9L1090.4 478.9L1090.4 480.4M1097.0 480.4L1100.6 480.4L1102.4 478.9L1102.4 472.7L1100.6 471.2L1097.0 471.2L1095.2 472.7L1095.2 478.9L1097.0 480.4M1095.7 478.4L1101.8 473.2M1109.9 471.2L1103.2 471.2L1103.2 475.0L1108.1 475.0L1109.9 476.6L1109.9 478.9L1108.1 480.4L1104.5 480.4L1102.7 478.9M1145.3 471.2L1148.9 475.8L1152.5 471.2M1148.9 475.8L1148.9 480.4M1185.3 475.8L1183.5 474.3L1183.5 472.7L1185.3 471.2L1188.9 471.2L1190.7 472.7L1190.7 474.3L1188.9 475.8L1185.3 475.8L1183.5 477.3L1183.5 478.9L1185.3 480.4L1188.9 480.4L1190.7 478.9L1190.7 477.3L1188.9 475.8M1191.0 471.2L1198.2 471.2L1198.2 472.7L1193.7 480.4M1205.7 476.6L1200.3 476.6L1198.5 475.0L1198.5 472.7L1200.3 471.2L1203.9 471.2L1205.7 472.7L1205.7 478.9L1203.9 480.4L1199.4 480.4M922.1 486.8L917.6 486.8L915.8 488.3L915.8 494.5L917.6 496.0L921.2 496.0L923.0 494.5L923.0 492.2L921.2 490.6L915.8 490.6M1008.2 496.0L1011.8 496.0L1013.6 494.5L1013.6 488.3L1011.8 486.8L1008.2 486.8L1006.4 488.3L1006.4 494.5L1008.2 496.0M1006.9 494.0L1013.0 488.8M1016.6 496.0L1018.4 496.0L1018.4 494.5L1016.6 494.5L1016.6 496.0M1028.6 492.2L1023.2 492.2L1021.4 490.6L1021.4 488.3L1023.2 486.8L1026.8 486.8L1028.6 488.3L1028.6 494.5L1026.8 496.0L1022.3 496.0M1030.7 496.0L1034.3 496.0L1036.1 494.5L1036.1 488.3L1034.3 486.8L1030.7 486.8L1028.9 488.3L1028.9 494.5L1030.7 496.0M1029.4 494.0L1035.5 488.8M1065.0 494.5L1065.0 488.3M1061.4 491.4L1068.6 491.4M1068.9 496.0L1076.1 486.8M1077.3 491.4L1082.7 491.4M1085.7 496.0L1089.3 496.0L1091.1 494.5L1091.1 488.3L1089.3 486.8L1085.7 486.8L1083.9 488.3L1083.9 494.5L1085.7 496.0M1084.4 494.0L1090.5 488.8M1094.1 496.0L1095.9 496.0L1095.9 494.5L1094.1 494.5L1094.1 496.0M1100.7 496.0L1104.3 496.0L1106.1 494.5L1106.1 488.3L1104.3 486.8L1100.7 486.8L1098.9 488.3L1098.9 494.5L1100.7 496.0M1099.4 494.0L1105.5 488.8M1113.6 486.8L1106.9 486.8L1106.9 490.6L1111.8 490.6L1113.6 492.2L1113.6 494.5L1111.8 496.0L1108.2 496.0L1106.4 494.5M1145.3 486.8L1148.9 491.4L1152.5 486.8M1148.9 491.4L1148.9 496.0M1190.2 488.3L1192.0 486.8L1195.6 486.8L1197.4 488.3L1197.4 489.9L1195.6 491.4L1197.4 492.9L1197.4 494.5L1195.6 496.0L1192.0 496.0L1190.2 494.5M1192.9 491.4L1195.6 491.4M1203.1 496.0L1203.1 486.8L1197.7 492.9L1204.9 492.9M911.6 503.6L913.4 502.1L917.0 502.1L918.8 503.6L918.8 505.2L911.6 511.3L918.8 511.3M920.7 503.8L922.7 502.1L922.7 511.3M920.5 511.3L924.8 511.3M1006.0 503.6L1007.8 502.1L1011.4 502.1L1013.2 503.6L1013.2 505.2L1006.0 511.3L1013.2 511.3M1016.2 511.3L1018.0 511.3L1018.0 509.8L1016.2 509.8L1016.2 511.3M1021.0 503.6L1022.8 502.1L1026.4 502.1L1028.2 503.6L1028.2 505.2L1026.4 506.7L1028.2 508.2L1028.2 509.8L1026.4 511.3L1022.8 511.3L1021.0 509.8M1023.7 506.7L1026.4 506.7M1030.3 511.3L1033.9 511.3L1035.7 509.8L1035.7 503.6L1033.9 502.1L1030.3 502.1L1028.5 503.6L1028.5 509.8L1030.3 511.3M1029.0 509.3L1035.1 504.1M1065.0 509.8L1065.0 503.6M1061.4 506.7L1068.6 506.7M1068.9 511.3L1076.1 502.1M1077.3 506.7L1082.7 506.7M1085.7 511.3L1089.3 511.3L1091.1 509.8L1091.1 503.6L1089.3 502.1L1085.7 502.1L1083.9 503.6L1083.9 509.8L1085.7 511.3M1084.4 509.3L1090.5 504.1M1094.1 511.3L1095.9 511.3L1095.9 509.8L1094.1 509.8L1094.1 511.3M1100.5 503.8L1102.5 502.1L1102.5 511.3M1100.3 511.3L1104.6 511.3M1108.2 511.3L1111.8 511.3L1113.6 509.8L1113.6 503.6L1111.8 502.1L1108.2 502.1L1106.4 503.6L1106.4 509.8L1108.2 511.3M1106.9 509.3L1113.0 504.1M1146.0 511.3L1146.0 502.1L1153.2 511.3L1153.2 502.1M1197.4 511.3L1197.4 502.1L1192.0 508.2L1199.2 508.2M911.6 519.1L913.4 517.6L917.0 517.6L918.8 519.1L918.8 520.7L911.6 526.8L918.8 526.8M920.9 522.2L919.1 520.7L919.1 519.1L920.9 517.6L924.5 517.6L926.3 519.1L926.3 520.7L924.5 522.2L920.9 522.2L919.1 523.7L919.1 525.3L920.9 526.8L924.5 526.8L926.3 525.3L926.3 523.7L924.5 522.2M1006.0 519.1L1007.8 517.6L1011.4 517.6L1013.2 519.1L1013.2 520.7L1011.4 522.2L1013.2 523.7L1013.2 525.3L1011.4 526.8L1007.8 526.8L1006.0 525.3M1008.7 522.2L1011.4 522.2M1016.2 526.8L1018.0 526.8L1018.0 525.3L1016.2 525.3L1016.2 526.8M1022.8 526.8L1026.4 526.8L1028.2 525.3L1028.2 519.1L1026.4 517.6L1022.8 517.6L1021.0 519.1L1021.0 525.3L1022.8 526.8M1021.5 524.8L1027.6 519.6M1030.3 526.8L1033.9 526.8L1035.7 525.3L1035.7 519.1L1033.9 517.6L1030.3 517.6L1028.5 519.1L1028.5 525.3L1030.3 526.8M1029.0 524.8L1035.1 519.6M1065.0 525.3L1065.0 519.1M1061.4 522.2L1068.6 522.2M1068.9 526.8L1076.1 517.6M1077.3 522.2L1082.7 522.2M1085.7 526.8L1089.3 526.8L1091.1 525.3L1091.1 519.1L1089.3 517.6L1085.7 517.6L1083.9 519.1L1083.9 525.3L1085.7 526.8M1084.4 524.8L1090.5 519.6M1094.1 526.8L1095.9 526.8L1095.9 525.3L1094.1 525.3L1094.1 526.8M1100.5 519.3L1102.5 517.6L1102.5 526.8M1100.3 526.8L1104.6 526.8M1108.2 526.8L1111.8 526.8L1113.6 525.3L1113.6 519.1L1111.8 517.6L1108.2 517.6L1106.4 519.1L1106.4 525.3L1108.2 526.8M1106.9 524.8L1113.0 519.6M1146.0 526.8L1146.0 517.6L1153.2 526.8L1153.2 517.6M1198.3 517.6L1193.8 517.6L1192.0 519.1L1192.0 525.3L1193.8 526.8L1197.4 526.8L1199.2 525.3L1199.2 523.0L1197.4 521.4L1192.0 521.4" stroke="#e81c1c" stroke-width="0.95" fill="none" stroke-linejoin="round"/>
<path d="M213.2 195.0L211.0 201.0H215.4Z M211.9 201.0V206.0H214.5V201.0M213.2 477.0L211.0 471.0H215.4Z M211.9 471.0V466.0H214.5V471.0M234.6 417.0L232.4 411.0H236.8Z M233.3 411.0V406.0H235.9V411.0M234.6 477.0L232.4 483.0H236.8Z M233.3 483.0V488.0H235.9V483.0M334.7 435.0L328.7 432.8V437.2Z M328.7 433.7H323.7V436.3H328.7M334.7 456.0L328.7 453.8V458.2Z M328.7 454.7H323.7V457.3H328.7M334.7 480.7L328.7 478.5V482.9Z M328.7 479.4H323.7V482.0H328.7M338.2 435.0L344.2 432.8V437.2Z M344.2 433.7H349.2V436.3H344.2M362.8 456.0L368.8 453.8V458.2Z M368.8 454.7H373.8V457.3H368.8M367.2 481.0L373.2 478.8V483.2Z M373.2 479.7H378.2V482.3H373.2M334.7 500.3L340.7 498.1V502.5Z M340.7 499.0H345.7V501.6H340.7M477.0 500.3L471.0 498.1V502.5Z M471.0 499.0H466.0V501.6H471.0M334.7 519.0L340.7 516.8V521.2Z M340.7 517.7H345.7V520.3H340.7M480.0 519.0L474.0 516.8V521.2Z M474.0 517.7H469.0V520.3H474.0M334.7 538.2L340.7 536.0V540.4Z M340.7 536.9H345.7V539.5H340.7M689.3 538.2L683.3 536.0V540.4Z M683.3 536.9H678.3V539.5H683.3M334.7 554.0L340.7 551.8V556.2Z M340.7 552.7H345.7V555.3H340.7M692.5 554.0L686.5 551.8V556.2Z M686.5 552.7H681.5V555.3H686.5M334.7 569.0L340.7 566.8V571.2Z M340.7 567.7H345.7V570.3H340.7M794.0 569.0L788.0 566.8V571.2Z M788.0 567.7H783.0V570.3H788.0M334.7 586.5L340.7 584.3V588.7Z M340.7 585.2H345.7V587.8H340.7M797.3 586.5L791.3 584.3V588.7Z M791.3 585.2H786.3V587.8H791.3M334.7 601.3L340.7 599.1V603.5Z M340.7 600.0H345.7V602.6H340.7M835.0 601.3L829.0 599.1V603.5Z M829.0 600.0H824.0V602.6H829.0M334.7 620.2L340.7 618.0V622.4Z M340.7 618.9H345.7V621.5H340.7M838.8 620.2L832.8 618.0V622.4Z M832.8 618.9H827.8V621.5H832.8M847.0 438.5L844.8 432.5H849.2Z M845.7 432.5V427.5H848.3V432.5M863.0 435.2L860.8 429.2H865.2Z M861.7 429.2V424.2H864.3V429.2M847.0 476.3L844.8 482.3H849.2Z M845.7 482.3V487.3H848.3V482.3M863.0 476.3L860.8 482.3H865.2Z M861.7 482.3V487.3H864.3V482.3M812.0 470.6L809.8 464.6H814.2Z M810.7 464.6V459.6H813.3V464.6M812.0 476.3L809.8 482.3H814.2Z M810.7 482.3V487.3H813.3V482.3M852.0 239.0L846.0 236.8V241.2Z M846.0 237.7H841.0V240.3H846.0M852.0 281.5L846.0 279.3V283.7Z M846.0 280.2H841.0V282.8H846.0M485.5 441L485.8 448L490 446Z" stroke="#e81c1c" stroke-width="1" fill="none"/>
<path d="M500 239h3v1h-1v1h1v1h-3v-1h1v-1h-1zM458 350h3v1h-1v1h1v1h-3v-1h1v-1h-1zM448 351h3v1h-1v1h1v1h-3v-1h1v-1h-1zM622 352h3v1h-1v1h1v1h-3v-1h1v-1h-1zM523 348h3v1h-1v1h1v1h-3v-1h1v-1h-1zM686 266h3v1h-1v1h1v1h-3v-1h1v-1h-1zM693 271h3v1h-1v1h1v1h-3v-1h1v-1h-1zM699 276h3v1h-1v1h1v1h-3v-1h1v-1h-1zM704 284h3v1h-1v1h1v1h-3v-1h1v-1h-1zM413 333h3v1h-1v1h1v1h-3v-1h1v-1h-1zM731 423h3v1h-1v1h1v1h-3v-1h1v-1h-1zM738 416h3v1h-1v1h1v1h-3v-1h1v-1h-1zM385 272h3v1h-1v1h1v1h-3v-1h1v-1h-1zM632 392h3v1h-1v1h1v1h-3v-1h1v-1h-1zM585 264h3v1h-1v1h1v1h-3v-1h1v-1h-1zM666 207h3v1h-1v1h1v1h-3v-1h1v-1h-1zM666 214h3v1h-1v1h1v1h-3v-1h1v-1h-1zM646 385h3v1h-1v1h1v1h-3v-1h1v-1h-1zM773 417h3v1h-1v1h1v1h-3v-1h1v-1h-1zM371 255h3v1h-1v1h1v1h-3v-1h1v-1h-1zM442 301h3v1h-1v1h1v1h-3v-1h1v-1h-1zM447 307h3v1h-1v1h1v1h-3v-1h1v-1h-1zM824 331h3v1h-1v1h1v1h-3v-1h1v-1h-1zM831 330h3v1h-1v1h1v1h-3v-1h1v-1h-1zM799 400h3v1h-1v1h1v1h-3v-1h1v-1h-1zM422 410h3v1h-1v1h1v1h-3v-1h1v-1h-1zM422 425h3v1h-1v1h1v1h-3v-1h1v-1h-1zM352 206h3v1h-1v1h1v1h-3v-1h1v-1h-1zM360 206h3v1h-1v1h1v1h-3v-1h1v-1h-1zM577 248h3v1h-1v1h1v1h-3v-1h1v-1h-1zM582 247h3v1h-1v1h1v1h-3v-1h1v-1h-1zM570 378h3v1h-1v1h1v1h-3v-1h1v-1h-1zM585 394h3v1h-1v1h1v1h-3v-1h1v-1h-1zM773 206h3v1h-1v1h1v1h-3v-1h1v-1h-1zM501 347h3v1h-1v1h1v1h-3v-1h1v-1h-1zM567 359h3v1h-1v1h1v1h-3v-1h1v-1h-1zM572 358h3v1h-1v1h1v1h-3v-1h1v-1h-1zM580 359h3v1h-1v1h1v1h-3v-1h1v-1h-1zM398 216h3v1h-1v1h1v1h-3v-1h1v-1h-1zM397 222h3v1h-1v1h1v1h-3v-1h1v-1h-1zM728 338h3v1h-1v1h1v1h-3v-1h1v-1h-1zM694 332h3v1h-1v1h1v1h-3v-1h1v-1h-1zM489 231h3v1h-1v1h1v1h-3v-1h1v-1h-1zM465 235h3v1h-1v1h1v1h-3v-1h1v-1h-1zM465 241h3v1h-1v1h1v1h-3v-1h1v-1h-1zM690 471h3v1h-1v1h1v1h-3v-1h1v-1h-1zM506 324h3v1h-1v1h1v1h-3v-1h1v-1h-1zM789 249h3v1h-1v1h1v1h-3v-1h1v-1h-1zM687 222h3v1h-1v1h1v1h-3v-1h1v-1h-1zM374 456h3v1h-1v1h1v1h-3v-1h1v-1h-1zM448 272h3v1h-1v1h1v1h-3v-1h1v-1h-1zM603 254h3v1h-1v1h1v1h-3v-1h1v-1h-1zM603 263h3v1h-1v1h1v1h-3v-1h1v-1h-1zM786 460h3v1h-1v1h1v1h-3v-1h1v-1h-1zM702 235h3v1h-1v1h1v1h-3v-1h1v-1h-1zM707 237h3v1h-1v1h1v1h-3v-1h1v-1h-1zM553 214h3v1h-1v1h1v1h-3v-1h1v-1h-1zM558 219h3v1h-1v1h1v1h-3v-1h1v-1h-1zM367 250h3v1h-1v1h1v1h-3v-1h1v-1h-1zM499 206h3v1h-1v1h1v1h-3v-1h1v-1h-1zM593 258h3v1h-1v1h1v1h-3v-1h1v-1h-1zM490 270h3v1h-1v1h1v1h-3v-1h1v-1h-1zM490 277h3v1h-1v1h1v1h-3v-1h1v-1h-1zM490 283h3v1h-1v1h1v1h-3v-1h1v-1h-1zM480 369h3v1h-1v1h1v1h-3v-1h1v-1h-1zM594 323h3v1h-1v1h1v1h-3v-1h1v-1h-1zM592 328h3v1h-1v1h1v1h-3v-1h1v-1h-1zM517 226h3v1h-1v1h1v1h-3v-1h1v-1h-1zM518 233h3v1h-1v1h1v1h-3v-1h1v-1h-1zM517 241h3v1h-1v1h1v1h-3v-1h1v-1h-1zM384 454h3v1h-1v1h1v1h-3v-1h1v-1h-1zM709 254h3v1h-1v1h1v1h-3v-1h1v-1h-1zM714 255h3v1h-1v1h1v1h-3v-1h1v-1h-1zM437 363h3v1h-1v1h1v1h-3v-1h1v-1h-1zM483 219h3v1h-1v1h1v1h-3v-1h1v-1h-1zM495 218h3v1h-1v1h1v1h-3v-1h1v-1h-1zM710 270h3v1h-1v1h1v1h-3v-1h1v-1h-1zM710 275h3v1h-1v1h1v1h-3v-1h1v-1h-1zM519 334h3v1h-1v1h1v1h-3v-1h1v-1h-1zM527 335h3v1h-1v1h1v1h-3v-1h1v-1h-1zM509 285h3v1h-1v1h1v1h-3v-1h1v-1h-1zM435 201h3v1h-1v1h1v1h-3v-1h1v-1h-1zM442 207h3v1h-1v1h1v1h-3v-1h1v-1h-1zM517 315h3v1h-1v1h1v1h-3v-1h1v-1h-1zM804 266h3v1h-1v1h1v1h-3v-1h1v-1h-1zM778 422h3v1h-1v1h1v1h-3v-1h1v-1h-1zM777 429h3v1h-1v1h1v1h-3v-1h1v-1h-1zM569 405h3v1h-1v1h1v1h-3v-1h1v-1h-1zM516 280h3v1h-1v1h1v1h-3v-1h1v-1h-1zM422 242h3v1h-1v1h1v1h-3v-1h1v-1h-1zM447 447h3v1h-1v1h1v1h-3v-1h1v-1h-1zM454 447h3v1h-1v1h1v1h-3v-1h1v-1h-1zM461 447h3v1h-1v1h1v1h-3v-1h1v-1h-1zM716 261h3v1h-1v1h1v1h-3v-1h1v-1h-1zM726 420h3v1h-1v1h1v1h-3v-1h1v-1h-1zM415 342h3v1h-1v1h1v1h-3v-1h1v-1h-1zM718 324h3v1h-1v1h1v1h-3v-1h1v-1h-1zM723 330h3v1h-1v1h1v1h-3v-1h1v-1h-1zM402 266h3v1h-1v1h1v1h-3v-1h1v-1h-1zM407 262h3v1h-1v1h1v1h-3v-1h1v-1h-1zM432 269h3v1h-1v1h1v1h-3v-1h1v-1h-1zM439 271h3v1h-1v1h1v1h-3v-1h1v-1h-1zM467 462h3v1h-1v1h1v1h-3v-1h1v-1h-1zM466 382h3v1h-1v1h1v1h-3v-1h1v-1h-1zM467 387h3v1h-1v1h1v1h-3v-1h1v-1h-1zM719 252h3v1h-1v1h1v1h-3v-1h1v-1h-1zM443 465h3v1h-1v1h1v1h-3v-1h1v-1h-1zM670 343h3v1h-1v1h1v1h-3v-1h1v-1h-1zM675 342h3v1h-1v1h1v1h-3v-1h1v-1h-1zM377 221h3v1h-1v1h1v1h-3v-1h1v-1h-1zM383 221h3v1h-1v1h1v1h-3v-1h1v-1h-1zM492 418h3v1h-1v1h1v1h-3v-1h1v-1h-1zM608 321h3v1h-1v1h1v1h-3v-1h1v-1h-1zM649 310h3v1h-1v1h1v1h-3v-1h1v-1h-1zM655 309h3v1h-1v1h1v1h-3v-1h1v-1h-1zM374 371h3v1h-1v1h1v1h-3v-1h1v-1h-1zM688 453h3v1h-1v1h1v1h-3v-1h1v-1h-1zM371 425h3v1h-1v1h1v1h-3v-1h1v-1h-1zM705 425h3v1h-1v1h1v1h-3v-1h1v-1h-1zM551 226h3v1h-1v1h1v1h-3v-1h1v-1h-1zM668 231h3v1h-1v1h1v1h-3v-1h1v-1h-1zM674 237h3v1h-1v1h1v1h-3v-1h1v-1h-1zM556 250h3v1h-1v1h1v1h-3v-1h1v-1h-1zM432 222h3v1h-1v1h1v1h-3v-1h1v-1h-1zM831 226h3v1h-1v1h1v1h-3v-1h1v-1h-1zM562 270h3v1h-1v1h1v1h-3v-1h1v-1h-1zM511 215h3v1h-1v1h1v1h-3v-1h1v-1h-1zM800 421h3v1h-1v1h1v1h-3v-1h1v-1h-1zM733 349h3v1h-1v1h1v1h-3v-1h1v-1h-1zM611 374h3v1h-1v1h1v1h-3v-1h1v-1h-1zM543 276h3v1h-1v1h1v1h-3v-1h1v-1h-1zM549 276h3v1h-1v1h1v1h-3v-1h1v-1h-1zM787 314h3v1h-1v1h1v1h-3v-1h1v-1h-1zM536 355h3v1h-1v1h1v1h-3v-1h1v-1h-1zM541 350h3v1h-1v1h1v1h-3v-1h1v-1h-1zM810 239h3v1h-1v1h1v1h-3v-1h1v-1h-1zM579 213h3v1h-1v1h1v1h-3v-1h1v-1h-1zM585 212h3v1h-1v1h1v1h-3v-1h1v-1h-1zM730 260h3v1h-1v1h1v1h-3v-1h1v-1h-1zM729 266h3v1h-1v1h1v1h-3v-1h1v-1h-1zM536 340h3v1h-1v1h1v1h-3v-1h1v-1h-1zM455 408h3v1h-1v1h1v1h-3v-1h1v-1h-1zM558 337h3v1h-1v1h1v1h-3v-1h1v-1h-1zM702 412h3v1h-1v1h1v1h-3v-1h1v-1h-1zM709 413h3v1h-1v1h1v1h-3v-1h1v-1h-1zM715 413h3v1h-1v1h1v1h-3v-1h1v-1h-1zM833 400h3v1h-1v1h1v1h-3v-1h1v-1h-1zM482 422h3v1h-1v1h1v1h-3v-1h1v-1h-1zM370 295h3v1h-1v1h1v1h-3v-1h1v-1h-1zM371 300h3v1h-1v1h1v1h-3v-1h1v-1h-1zM661 275h3v1h-1v1h1v1h-3v-1h1v-1h-1zM655 297h3v1h-1v1h1v1h-3v-1h1v-1h-1zM706 300h3v1h-1v1h1v1h-3v-1h1v-1h-1zM712 306h3v1h-1v1h1v1h-3v-1h1v-1h-1zM427 402h3v1h-1v1h1v1h-3v-1h1v-1h-1zM361 331h3v1h-1v1h1v1h-3v-1h1v-1h-1zM368 326h3v1h-1v1h1v1h-3v-1h1v-1h-1zM374 320h3v1h-1v1h1v1h-3v-1h1v-1h-1zM404 300h3v1h-1v1h1v1h-3v-1h1v-1h-1zM404 311h3v1h-1v1h1v1h-3v-1h1v-1h-1zM513 376h3v1h-1v1h1v1h-3v-1h1v-1h-1zM512 383h3v1h-1v1h1v1h-3v-1h1v-1h-1zM512 390h3v1h-1v1h1v1h-3v-1h1v-1h-1zM665 253h3v1h-1v1h1v1h-3v-1h1v-1h-1zM665 258h3v1h-1v1h1v1h-3v-1h1v-1h-1zM706 329h3v1h-1v1h1v1h-3v-1h1v-1h-1zM711 329h3v1h-1v1h1v1h-3v-1h1v-1h-1zM834 270h3v1h-1v1h1v1h-3v-1h1v-1h-1zM684 431h3v1h-1v1h1v1h-3v-1h1v-1h-1zM710 288h3v1h-1v1h1v1h-3v-1h1v-1h-1zM716 295h3v1h-1v1h1v1h-3v-1h1v-1h-1zM827 429h3v1h-1v1h1v1h-3v-1h1v-1h-1zM395 369h3v1h-1v1h1v1h-3v-1h1v-1h-1zM353 235h3v1h-1v1h1v1h-3v-1h1v-1h-1zM765 408h3v1h-1v1h1v1h-3v-1h1v-1h-1zM575 234h3v1h-1v1h1v1h-3v-1h1v-1h-1zM354 270h3v1h-1v1h1v1h-3v-1h1v-1h-1zM767 229h3v1h-1v1h1v1h-3v-1h1v-1h-1zM365 294h3v1h-1v1h1v1h-3v-1h1v-1h-1zM820 360h3v1h-1v1h1v1h-3v-1h1v-1h-1zM826 368h3v1h-1v1h1v1h-3v-1h1v-1h-1zM831 372h3v1h-1v1h1v1h-3v-1h1v-1h-1zM806 409h3v1h-1v1h1v1h-3v-1h1v-1h-1zM815 420h3v1h-1v1h1v1h-3v-1h1v-1h-1zM781 402h3v1h-1v1h1v1h-3v-1h1v-1h-1zM770 322h3v1h-1v1h1v1h-3v-1h1v-1h-1zM777 315h3v1h-1v1h1v1h-3v-1h1v-1h-1zM782 310h3v1h-1v1h1v1h-3v-1h1v-1h-1zM658 390h3v1h-1v1h1v1h-3v-1h1v-1h-1zM659 396h3v1h-1v1h1v1h-3v-1h1v-1h-1zM833 244h3v1h-1v1h1v1h-3v-1h1v-1h-1zM536 213h3v1h-1v1h1v1h-3v-1h1v-1h-1zM702 445h3v1h-1v1h1v1h-3v-1h1v-1h-1zM707 450h3v1h-1v1h1v1h-3v-1h1v-1h-1zM538 394h3v1h-1v1h1v1h-3v-1h1v-1h-1zM791 234h3v1h-1v1h1v1h-3v-1h1v-1h-1zM511 431h3v1h-1v1h1v1h-3v-1h1v-1h-1zM345 313h3v1h-1v1h1v1h-3v-1h1v-1h-1zM707 462h3v1h-1v1h1v1h-3v-1h1v-1h-1zM735 252h3v1h-1v1h1v1h-3v-1h1v-1h-1zM741 245h3v1h-1v1h1v1h-3v-1h1v-1h-1zM748 240h3v1h-1v1h1v1h-3v-1h1v-1h-1zM577 274h3v1h-1v1h1v1h-3v-1h1v-1h-1zM463 316h3v1h-1v1h1v1h-3v-1h1v-1h-1zM478 265h3v1h-1v1h1v1h-3v-1h1v-1h-1zM621 292h3v1h-1v1h1v1h-3v-1h1v-1h-1zM783 365h3v1h-1v1h1v1h-3v-1h1v-1h-1zM666 267h3v1h-1v1h1v1h-3v-1h1v-1h-1zM586 281h3v1h-1v1h1v1h-3v-1h1v-1h-1zM598 292h3v1h-1v1h1v1h-3v-1h1v-1h-1zM353 216h3v1h-1v1h1v1h-3v-1h1v-1h-1zM509 412h3v1h-1v1h1v1h-3v-1h1v-1h-1zM515 340h3v1h-1v1h1v1h-3v-1h1v-1h-1zM823 223h3v1h-1v1h1v1h-3v-1h1v-1h-1zM616 212h3v1h-1v1h1v1h-3v-1h1v-1h-1zM665 414h3v1h-1v1h1v1h-3v-1h1v-1h-1zM666 422h3v1h-1v1h1v1h-3v-1h1v-1h-1zM358 373h3v1h-1v1h1v1h-3v-1h1v-1h-1zM492 393h3v1h-1v1h1v1h-3v-1h1v-1h-1zM492 400h3v1h-1v1h1v1h-3v-1h1v-1h-1zM804 220h3v1h-1v1h1v1h-3v-1h1v-1h-1zM378 327h3v1h-1v1h1v1h-3v-1h1v-1h-1zM679 231h3v1h-1v1h1v1h-3v-1h1v-1h-1zM347 395h3v1h-1v1h1v1h-3v-1h1v-1h-1zM616 334h3v1h-1v1h1v1h-3v-1h1v-1h-1zM621 335h3v1h-1v1h1v1h-3v-1h1v-1h-1zM745 219h3v1h-1v1h1v1h-3v-1h1v-1h-1zM752 226h3v1h-1v1h1v1h-3v-1h1v-1h-1zM379 287h3v1h-1v1h1v1h-3v-1h1v-1h-1zM675 431h3v1h-1v1h1v1h-3v-1h1v-1h-1zM531 302h3v1h-1v1h1v1h-3v-1h1v-1h-1zM499 272h3v1h-1v1h1v1h-3v-1h1v-1h-1zM729 278h3v1h-1v1h1v1h-3v-1h1v-1h-1zM412 466h3v1h-1v1h1v1h-3v-1h1v-1h-1zM417 460h3v1h-1v1h1v1h-3v-1h1v-1h-1zM423 454h3v1h-1v1h1v1h-3v-1h1v-1h-1zM570 255h3v1h-1v1h1v1h-3v-1h1v-1h-1zM779 341h3v1h-1v1h1v1h-3v-1h1v-1h-1zM778 348h3v1h-1v1h1v1h-3v-1h1v-1h-1zM618 308h3v1h-1v1h1v1h-3v-1h1v-1h-1zM625 313h3v1h-1v1h1v1h-3v-1h1v-1h-1zM628 319h3v1h-1v1h1v1h-3v-1h1v-1h-1zM730 241h3v1h-1v1h1v1h-3v-1h1v-1h-1zM464 207h3v1h-1v1h1v1h-3v-1h1v-1h-1zM356 300h3v1h-1v1h1v1h-3v-1h1v-1h-1zM361 300h3v1h-1v1h1v1h-3v-1h1v-1h-1zM816 270h3v1h-1v1h1v1h-3v-1h1v-1h-1zM816 275h3v1h-1v1h1v1h-3v-1h1v-1h-1zM816 280h3v1h-1v1h1v1h-3v-1h1v-1h-1zM817 288h3v1h-1v1h1v1h-3v-1h1v-1h-1zM453 215h3v1h-1v1h1v1h-3v-1h1v-1h-1zM471 339h3v1h-1v1h1v1h-3v-1h1v-1h-1zM564 383h3v1h-1v1h1v1h-3v-1h1v-1h-1zM799 438h3v1h-1v1h1v1h-3v-1h1v-1h-1zM804 432h3v1h-1v1h1v1h-3v-1h1v-1h-1zM525 404h3v1h-1v1h1v1h-3v-1h1v-1h-1zM537 404h3v1h-1v1h1v1h-3v-1h1v-1h-1zM454 230h3v1h-1v1h1v1h-3v-1h1v-1h-1zM356 361h3v1h-1v1h1v1h-3v-1h1v-1h-1zM585 240h3v1h-1v1h1v1h-3v-1h1v-1h-1zM591 239h3v1h-1v1h1v1h-3v-1h1v-1h-1zM715 466h3v1h-1v1h1v1h-3v-1h1v-1h-1zM719 471h3v1h-1v1h1v1h-3v-1h1v-1h-1zM785 213h3v1h-1v1h1v1h-3v-1h1v-1h-1zM785 219h3v1h-1v1h1v1h-3v-1h1v-1h-1zM415 204h3v1h-1v1h1v1h-3v-1h1v-1h-1zM420 210h3v1h-1v1h1v1h-3v-1h1v-1h-1zM704 218h3v1h-1v1h1v1h-3v-1h1v-1h-1zM764 296h3v1h-1v1h1v1h-3v-1h1v-1h-1zM771 357h3v1h-1v1h1v1h-3v-1h1v-1h-1zM584 338h3v1h-1v1h1v1h-3v-1h1v-1h-1zM462 423h3v1h-1v1h1v1h-3v-1h1v-1h-1zM589 336h3v1h-1v1h1v1h-3v-1h1v-1h-1zM774 239h3v1h-1v1h1v1h-3v-1h1v-1h-1zM781 238h3v1h-1v1h1v1h-3v-1h1v-1h-1zM677 295h3v1h-1v1h1v1h-3v-1h1v-1h-1zM683 288h3v1h-1v1h1v1h-3v-1h1v-1h-1zM553 338h3v1h-1v1h1v1h-3v-1h1v-1h-1zM726 457h3v1h-1v1h1v1h-3v-1h1v-1h-1zM369 447h3v1h-1v1h1v1h-3v-1h1v-1h-1zM456 208h3v1h-1v1h1v1h-3v-1h1v-1h-1zM794 357h3v1h-1v1h1v1h-3v-1h1v-1h-1zM794 363h3v1h-1v1h1v1h-3v-1h1v-1h-1zM684 259h3v1h-1v1h1v1h-3v-1h1v-1h-1zM620 364h3v1h-1v1h1v1h-3v-1h1v-1h-1zM718 341h3v1h-1v1h1v1h-3v-1h1v-1h-1zM675 367h3v1h-1v1h1v1h-3v-1h1v-1h-1zM680 373h3v1h-1v1h1v1h-3v-1h1v-1h-1zM720 359h3v1h-1v1h1v1h-3v-1h1v-1h-1zM734 359h3v1h-1v1h1v1h-3v-1h1v-1h-1zM539 334h3v1h-1v1h1v1h-3v-1h1v-1h-1zM488 353h3v1h-1v1h1v1h-3v-1h1v-1h-1zM558 370h3v1h-1v1h1v1h-3v-1h1v-1h-1zM671 284h3v1h-1v1h1v1h-3v-1h1v-1h-1zM368 354h3v1h-1v1h1v1h-3v-1h1v-1h-1zM697 389h3v1h-1v1h1v1h-3v-1h1v-1h-1zM722 354h3v1h-1v1h1v1h-3v-1h1v-1h-1zM391 225h3v1h-1v1h1v1h-3v-1h1v-1h-1zM786 423h3v1h-1v1h1v1h-3v-1h1v-1h-1zM459 305h3v1h-1v1h1v1h-3v-1h1v-1h-1zM459 310h3v1h-1v1h1v1h-3v-1h1v-1h-1zM458 323h3v1h-1v1h1v1h-3v-1h1v-1h-1zM509 318h3v1h-1v1h1v1h-3v-1h1v-1h-1zM811 336h3v1h-1v1h1v1h-3v-1h1v-1h-1zM689 284h3v1h-1v1h1v1h-3v-1h1v-1h-1zM676 223h3v1h-1v1h1v1h-3v-1h1v-1h-1zM407 402h3v1h-1v1h1v1h-3v-1h1v-1h-1zM543 391h3v1h-1v1h1v1h-3v-1h1v-1h-1zM640 258h3v1h-1v1h1v1h-3v-1h1v-1h-1zM436 281h3v1h-1v1h1v1h-3v-1h1v-1h-1zM767 367h3v1h-1v1h1v1h-3v-1h1v-1h-1zM756 370h3v1h-1v1h1v1h-3v-1h1v-1h-1zM762 371h3v1h-1v1h1v1h-3v-1h1v-1h-1zM422 293h3v1h-1v1h1v1h-3v-1h1v-1h-1zM405 407h3v1h-1v1h1v1h-3v-1h1v-1h-1zM404 415h3v1h-1v1h1v1h-3v-1h1v-1h-1zM499 326h3v1h-1v1h1v1h-3v-1h1v-1h-1zM505 334h3v1h-1v1h1v1h-3v-1h1v-1h-1zM712 220h3v1h-1v1h1v1h-3v-1h1v-1h-1zM718 215h3v1h-1v1h1v1h-3v-1h1v-1h-1zM756 280h3v1h-1v1h1v1h-3v-1h1v-1h-1zM457 241h3v1h-1v1h1v1h-3v-1h1v-1h-1zM447 301h3v1h-1v1h1v1h-3v-1h1v-1h-1zM627 333h3v1h-1v1h1v1h-3v-1h1v-1h-1zM632 339h3v1h-1v1h1v1h-3v-1h1v-1h-1zM494 355h3v1h-1v1h1v1h-3v-1h1v-1h-1zM411 371h3v1h-1v1h1v1h-3v-1h1v-1h-1zM821 253h3v1h-1v1h1v1h-3v-1h1v-1h-1zM385 344h3v1h-1v1h1v1h-3v-1h1v-1h-1zM393 346h3v1h-1v1h1v1h-3v-1h1v-1h-1zM395 361h3v1h-1v1h1v1h-3v-1h1v-1h-1zM401 471h3v1h-1v1h1v1h-3v-1h1v-1h-1zM384 300h3v1h-1v1h1v1h-3v-1h1v-1h-1zM389 301h3v1h-1v1h1v1h-3v-1h1v-1h-1zM397 301h3v1h-1v1h1v1h-3v-1h1v-1h-1zM790 223h3v1h-1v1h1v1h-3v-1h1v-1h-1zM515 299h3v1h-1v1h1v1h-3v-1h1v-1h-1zM520 303h3v1h-1v1h1v1h-3v-1h1v-1h-1zM529 394h3v1h-1v1h1v1h-3v-1h1v-1h-1zM501 364h3v1h-1v1h1v1h-3v-1h1v-1h-1zM683 203h3v1h-1v1h1v1h-3v-1h1v-1h-1zM697 204h3v1h-1v1h1v1h-3v-1h1v-1h-1zM704 204h3v1h-1v1h1v1h-3v-1h1v-1h-1zM529 238h3v1h-1v1h1v1h-3v-1h1v-1h-1zM772 365h3v1h-1v1h1v1h-3v-1h1v-1h-1zM783 360h3v1h-1v1h1v1h-3v-1h1v-1h-1zM473 440h3v1h-1v1h1v1h-3v-1h1v-1h-1zM480 439h3v1h-1v1h1v1h-3v-1h1v-1h-1zM630 235h3v1h-1v1h1v1h-3v-1h1v-1h-1zM436 316h3v1h-1v1h1v1h-3v-1h1v-1h-1zM454 298h3v1h-1v1h1v1h-3v-1h1v-1h-1zM509 298h3v1h-1v1h1v1h-3v-1h1v-1h-1zM505 391h3v1h-1v1h1v1h-3v-1h1v-1h-1zM512 235h3v1h-1v1h1v1h-3v-1h1v-1h-1zM498 392h3v1h-1v1h1v1h-3v-1h1v-1h-1zM503 385h3v1h-1v1h1v1h-3v-1h1v-1h-1zM496 246h3v1h-1v1h1v1h-3v-1h1v-1h-1zM497 254h3v1h-1v1h1v1h-3v-1h1v-1h-1zM740 438h3v1h-1v1h1v1h-3v-1h1v-1h-1zM660 316h3v1h-1v1h1v1h-3v-1h1v-1h-1zM511 335h3v1h-1v1h1v1h-3v-1h1v-1h-1zM720 223h3v1h-1v1h1v1h-3v-1h1v-1h-1zM576 208h3v1h-1v1h1v1h-3v-1h1v-1h-1zM582 200h3v1h-1v1h1v1h-3v-1h1v-1h-1zM435 451h3v1h-1v1h1v1h-3v-1h1v-1h-1zM661 293h3v1h-1v1h1v1h-3v-1h1v-1h-1zM352 414h3v1h-1v1h1v1h-3v-1h1v-1h-1zM795 457h3v1h-1v1h1v1h-3v-1h1v-1h-1zM555 262h3v1h-1v1h1v1h-3v-1h1v-1h-1zM814 257h3v1h-1v1h1v1h-3v-1h1v-1h-1zM537 311h3v1h-1v1h1v1h-3v-1h1v-1h-1zM776 230h3v1h-1v1h1v1h-3v-1h1v-1h-1zM426 270h3v1h-1v1h1v1h-3v-1h1v-1h-1zM731 459h3v1h-1v1h1v1h-3v-1h1v-1h-1zM737 459h3v1h-1v1h1v1h-3v-1h1v-1h-1zM509 310h3v1h-1v1h1v1h-3v-1h1v-1h-1zM716 441h3v1h-1v1h1v1h-3v-1h1v-1h-1zM799 268h3v1h-1v1h1v1h-3v-1h1v-1h-1zM805 261h3v1h-1v1h1v1h-3v-1h1v-1h-1zM684 294h3v1h-1v1h1v1h-3v-1h1v-1h-1zM509 349h3v1h-1v1h1v1h-3v-1h1v-1h-1zM509 354h3v1h-1v1h1v1h-3v-1h1v-1h-1zM370 467h3v1h-1v1h1v1h-3v-1h1v-1h-1zM576 259h3v1h-1v1h1v1h-3v-1h1v-1h-1zM599 342h3v1h-1v1h1v1h-3v-1h1v-1h-1zM599 348h3v1h-1v1h1v1h-3v-1h1v-1h-1zM745 231h3v1h-1v1h1v1h-3v-1h1v-1h-1zM737 273h3v1h-1v1h1v1h-3v-1h1v-1h-1zM737 280h3v1h-1v1h1v1h-3v-1h1v-1h-1zM465 271h3v1h-1v1h1v1h-3v-1h1v-1h-1zM470 270h3v1h-1v1h1v1h-3v-1h1v-1h-1zM478 271h3v1h-1v1h1v1h-3v-1h1v-1h-1zM727 452h3v1h-1v1h1v1h-3v-1h1v-1h-1zM741 452h3v1h-1v1h1v1h-3v-1h1v-1h-1zM722 301h3v1h-1v1h1v1h-3v-1h1v-1h-1zM729 302h3v1h-1v1h1v1h-3v-1h1v-1h-1zM803 285h3v1h-1v1h1v1h-3v-1h1v-1h-1zM623 202h3v1h-1v1h1v1h-3v-1h1v-1h-1zM634 202h3v1h-1v1h1v1h-3v-1h1v-1h-1zM768 350h3v1h-1v1h1v1h-3v-1h1v-1h-1zM486 306h3v1h-1v1h1v1h-3v-1h1v-1h-1zM494 301h3v1h-1v1h1v1h-3v-1h1v-1h-1zM764 269h3v1h-1v1h1v1h-3v-1h1v-1h-1zM524 325h3v1h-1v1h1v1h-3v-1h1v-1h-1zM531 319h3v1h-1v1h1v1h-3v-1h1v-1h-1zM363 285h3v1h-1v1h1v1h-3v-1h1v-1h-1zM369 284h3v1h-1v1h1v1h-3v-1h1v-1h-1zM692 420h3v1h-1v1h1v1h-3v-1h1v-1h-1zM692 426h3v1h-1v1h1v1h-3v-1h1v-1h-1zM691 433h3v1h-1v1h1v1h-3v-1h1v-1h-1zM692 439h3v1h-1v1h1v1h-3v-1h1v-1h-1zM444 428h3v1h-1v1h1v1h-3v-1h1v-1h-1zM553 384h3v1h-1v1h1v1h-3v-1h1v-1h-1zM721 407h3v1h-1v1h1v1h-3v-1h1v-1h-1zM564 403h3v1h-1v1h1v1h-3v-1h1v-1h-1zM367 209h3v1h-1v1h1v1h-3v-1h1v-1h-1zM374 209h3v1h-1v1h1v1h-3v-1h1v-1h-1zM605 236h3v1h-1v1h1v1h-3v-1h1v-1h-1zM604 242h3v1h-1v1h1v1h-3v-1h1v-1h-1zM442 403h3v1h-1v1h1v1h-3v-1h1v-1h-1zM834 315h3v1h-1v1h1v1h-3v-1h1v-1h-1zM834 322h3v1h-1v1h1v1h-3v-1h1v-1h-1zM746 423h3v1h-1v1h1v1h-3v-1h1v-1h-1zM445 410h3v1h-1v1h1v1h-3v-1h1v-1h-1zM730 207h3v1h-1v1h1v1h-3v-1h1v-1h-1zM769 212h3v1h-1v1h1v1h-3v-1h1v-1h-1zM677 244h3v1h-1v1h1v1h-3v-1h1v-1h-1zM635 379h3v1h-1v1h1v1h-3v-1h1v-1h-1zM463 428h3v1h-1v1h1v1h-3v-1h1v-1h-1zM775 328h3v1h-1v1h1v1h-3v-1h1v-1h-1zM775 335h3v1h-1v1h1v1h-3v-1h1v-1h-1zM750 448h3v1h-1v1h1v1h-3v-1h1v-1h-1zM432 425h3v1h-1v1h1v1h-3v-1h1v-1h-1zM594 302h3v1h-1v1h1v1h-3v-1h1v-1h-1zM599 233h3v1h-1v1h1v1h-3v-1h1v-1h-1zM611 223h3v1h-1v1h1v1h-3v-1h1v-1h-1zM817 393h3v1h-1v1h1v1h-3v-1h1v-1h-1zM824 400h3v1h-1v1h1v1h-3v-1h1v-1h-1zM672 406h3v1h-1v1h1v1h-3v-1h1v-1h-1zM679 405h3v1h-1v1h1v1h-3v-1h1v-1h-1zM652 270h3v1h-1v1h1v1h-3v-1h1v-1h-1zM497 369h3v1h-1v1h1v1h-3v-1h1v-1h-1zM415 395h3v1h-1v1h1v1h-3v-1h1v-1h-1zM554 257h3v1h-1v1h1v1h-3v-1h1v-1h-1zM685 406h3v1h-1v1h1v1h-3v-1h1v-1h-1zM591 365h3v1h-1v1h1v1h-3v-1h1v-1h-1zM824 418h3v1h-1v1h1v1h-3v-1h1v-1h-1zM830 418h3v1h-1v1h1v1h-3v-1h1v-1h-1zM339 370h3v1h-1v1h1v1h-3v-1h1v-1h-1zM585 286h3v1h-1v1h1v1h-3v-1h1v-1h-1zM383 229h3v1h-1v1h1v1h-3v-1h1v-1h-1zM366 300h3v1h-1v1h1v1h-3v-1h1v-1h-1zM372 306h3v1h-1v1h1v1h-3v-1h1v-1h-1zM725 415h3v1h-1v1h1v1h-3v-1h1v-1h-1zM688 466h3v1h-1v1h1v1h-3v-1h1v-1h-1zM367 245h3v1h-1v1h1v1h-3v-1h1v-1h-1zM392 241h3v1h-1v1h1v1h-3v-1h1v-1h-1zM399 240h3v1h-1v1h1v1h-3v-1h1v-1h-1zM451 359h3v1h-1v1h1v1h-3v-1h1v-1h-1zM366 442h3v1h-1v1h1v1h-3v-1h1v-1h-1zM342 253h3v1h-1v1h1v1h-3v-1h1v-1h-1zM556 356h3v1h-1v1h1v1h-3v-1h1v-1h-1zM561 360h3v1h-1v1h1v1h-3v-1h1v-1h-1zM567 366h3v1h-1v1h1v1h-3v-1h1v-1h-1zM737 209h3v1h-1v1h1v1h-3v-1h1v-1h-1zM448 383h3v1h-1v1h1v1h-3v-1h1v-1h-1zM452 377h3v1h-1v1h1v1h-3v-1h1v-1h-1zM459 372h3v1h-1v1h1v1h-3v-1h1v-1h-1zM646 287h3v1h-1v1h1v1h-3v-1h1v-1h-1zM381 360h3v1h-1v1h1v1h-3v-1h1v-1h-1zM443 249h3v1h-1v1h1v1h-3v-1h1v-1h-1zM447 255h3v1h-1v1h1v1h-3v-1h1v-1h-1zM452 260h3v1h-1v1h1v1h-3v-1h1v-1h-1zM649 229h3v1h-1v1h1v1h-3v-1h1v-1h-1zM656 233h3v1h-1v1h1v1h-3v-1h1v-1h-1zM474 288h3v1h-1v1h1v1h-3v-1h1v-1h-1zM378 229h3v1h-1v1h1v1h-3v-1h1v-1h-1zM793 429h3v1h-1v1h1v1h-3v-1h1v-1h-1zM827 378h3v1h-1v1h1v1h-3v-1h1v-1h-1zM832 383h3v1h-1v1h1v1h-3v-1h1v-1h-1zM612 298h3v1h-1v1h1v1h-3v-1h1v-1h-1zM419 350h3v1h-1v1h1v1h-3v-1h1v-1h-1zM419 355h3v1h-1v1h1v1h-3v-1h1v-1h-1zM443 277h3v1h-1v1h1v1h-3v-1h1v-1h-1zM831 254h3v1h-1v1h1v1h-3v-1h1v-1h-1zM830 260h3v1h-1v1h1v1h-3v-1h1v-1h-1zM351 389h3v1h-1v1h1v1h-3v-1h1v-1h-1zM657 360h3v1h-1v1h1v1h-3v-1h1v-1h-1zM376 398h3v1h-1v1h1v1h-3v-1h1v-1h-1zM383 399h3v1h-1v1h1v1h-3v-1h1v-1h-1zM389 399h3v1h-1v1h1v1h-3v-1h1v-1h-1zM775 458h3v1h-1v1h1v1h-3v-1h1v-1h-1zM774 464h3v1h-1v1h1v1h-3v-1h1v-1h-1zM775 434h3v1h-1v1h1v1h-3v-1h1v-1h-1zM786 446h3v1h-1v1h1v1h-3v-1h1v-1h-1zM518 291h3v1h-1v1h1v1h-3v-1h1v-1h-1zM525 290h3v1h-1v1h1v1h-3v-1h1v-1h-1zM628 216h3v1h-1v1h1v1h-3v-1h1v-1h-1zM636 215h3v1h-1v1h1v1h-3v-1h1v-1h-1zM612 252h3v1h-1v1h1v1h-3v-1h1v-1h-1zM353 376h3v1h-1v1h1v1h-3v-1h1v-1h-1zM657 327h3v1h-1v1h1v1h-3v-1h1v-1h-1zM522 275h3v1h-1v1h1v1h-3v-1h1v-1h-1zM529 275h3v1h-1v1h1v1h-3v-1h1v-1h-1zM536 275h3v1h-1v1h1v1h-3v-1h1v-1h-1zM451 366h3v1h-1v1h1v1h-3v-1h1v-1h-1zM665 378h3v1h-1v1h1v1h-3v-1h1v-1h-1zM379 257h3v1h-1v1h1v1h-3v-1h1v-1h-1zM434 404h3v1h-1v1h1v1h-3v-1h1v-1h-1zM434 409h3v1h-1v1h1v1h-3v-1h1v-1h-1zM434 415h3v1h-1v1h1v1h-3v-1h1v-1h-1zM641 269h3v1h-1v1h1v1h-3v-1h1v-1h-1zM411 241h3v1h-1v1h1v1h-3v-1h1v-1h-1zM576 298h3v1h-1v1h1v1h-3v-1h1v-1h-1zM407 218h3v1h-1v1h1v1h-3v-1h1v-1h-1zM412 223h3v1h-1v1h1v1h-3v-1h1v-1h-1zM464 303h3v1h-1v1h1v1h-3v-1h1v-1h-1zM393 384h3v1h-1v1h1v1h-3v-1h1v-1h-1zM608 309h3v1h-1v1h1v1h-3v-1h1v-1h-1zM518 381h3v1h-1v1h1v1h-3v-1h1v-1h-1zM518 386h3v1h-1v1h1v1h-3v-1h1v-1h-1zM719 428h3v1h-1v1h1v1h-3v-1h1v-1h-1zM727 294h3v1h-1v1h1v1h-3v-1h1v-1h-1zM617 206h3v1h-1v1h1v1h-3v-1h1v-1h-1zM341 261h3v1h-1v1h1v1h-3v-1h1v-1h-1zM778 289h3v1h-1v1h1v1h-3v-1h1v-1h-1zM785 289h3v1h-1v1h1v1h-3v-1h1v-1h-1zM574 216h3v1h-1v1h1v1h-3v-1h1v-1h-1zM711 342h3v1h-1v1h1v1h-3v-1h1v-1h-1zM712 349h3v1h-1v1h1v1h-3v-1h1v-1h-1zM695 323h3v1h-1v1h1v1h-3v-1h1v-1h-1zM749 395h3v1h-1v1h1v1h-3v-1h1v-1h-1zM382 212h3v1h-1v1h1v1h-3v-1h1v-1h-1zM378 304h3v1h-1v1h1v1h-3v-1h1v-1h-1zM732 310h3v1h-1v1h1v1h-3v-1h1v-1h-1zM476 209h3v1h-1v1h1v1h-3v-1h1v-1h-1zM508 341h3v1h-1v1h1v1h-3v-1h1v-1h-1zM820 368h3v1h-1v1h1v1h-3v-1h1v-1h-1zM509 250h3v1h-1v1h1v1h-3v-1h1v-1h-1zM514 249h3v1h-1v1h1v1h-3v-1h1v-1h-1zM718 364h3v1h-1v1h1v1h-3v-1h1v-1h-1zM359 398h3v1h-1v1h1v1h-3v-1h1v-1h-1zM766 461h3v1h-1v1h1v1h-3v-1h1v-1h-1zM387 288h3v1h-1v1h1v1h-3v-1h1v-1h-1zM493 330h3v1h-1v1h1v1h-3v-1h1v-1h-1zM499 335h3v1h-1v1h1v1h-3v-1h1v-1h-1zM633 316h3v1h-1v1h1v1h-3v-1h1v-1h-1zM490 339h3v1h-1v1h1v1h-3v-1h1v-1h-1zM383 200h3v1h-1v1h1v1h-3v-1h1v-1h-1zM747 262h3v1h-1v1h1v1h-3v-1h1v-1h-1zM703 398h3v1h-1v1h1v1h-3v-1h1v-1h-1zM709 391h3v1h-1v1h1v1h-3v-1h1v-1h-1zM716 387h3v1h-1v1h1v1h-3v-1h1v-1h-1zM785 351h3v1h-1v1h1v1h-3v-1h1v-1h-1zM572 273h3v1h-1v1h1v1h-3v-1h1v-1h-1zM762 415h3v1h-1v1h1v1h-3v-1h1v-1h-1zM763 423h3v1h-1v1h1v1h-3v-1h1v-1h-1zM762 429h3v1h-1v1h1v1h-3v-1h1v-1h-1zM761 437h3v1h-1v1h1v1h-3v-1h1v-1h-1zM500 264h3v1h-1v1h1v1h-3v-1h1v-1h-1zM411 349h3v1h-1v1h1v1h-3v-1h1v-1h-1zM824 208h3v1h-1v1h1v1h-3v-1h1v-1h-1zM641 384h3v1h-1v1h1v1h-3v-1h1v-1h-1zM355 320h3v1h-1v1h1v1h-3v-1h1v-1h-1zM361 319h3v1h-1v1h1v1h-3v-1h1v-1h-1zM617 238h3v1h-1v1h1v1h-3v-1h1v-1h-1zM640 300h3v1h-1v1h1v1h-3v-1h1v-1h-1zM558 280h3v1h-1v1h1v1h-3v-1h1v-1h-1zM645 318h3v1h-1v1h1v1h-3v-1h1v-1h-1zM762 444h3v1h-1v1h1v1h-3v-1h1v-1h-1zM697 398h3v1h-1v1h1v1h-3v-1h1v-1h-1zM397 248h3v1h-1v1h1v1h-3v-1h1v-1h-1zM405 255h3v1h-1v1h1v1h-3v-1h1v-1h-1zM805 271h3v1h-1v1h1v1h-3v-1h1v-1h-1zM810 278h3v1h-1v1h1v1h-3v-1h1v-1h-1zM739 391h3v1h-1v1h1v1h-3v-1h1v-1h-1zM510 224h3v1h-1v1h1v1h-3v-1h1v-1h-1zM659 354h3v1h-1v1h1v1h-3v-1h1v-1h-1zM671 298h3v1h-1v1h1v1h-3v-1h1v-1h-1zM671 304h3v1h-1v1h1v1h-3v-1h1v-1h-1zM672 315h3v1h-1v1h1v1h-3v-1h1v-1h-1zM590 230h3v1h-1v1h1v1h-3v-1h1v-1h-1zM388 251h3v1h-1v1h1v1h-3v-1h1v-1h-1zM518 399h3v1h-1v1h1v1h-3v-1h1v-1h-1zM406 364h3v1h-1v1h1v1h-3v-1h1v-1h-1zM427 249h3v1h-1v1h1v1h-3v-1h1v-1h-1zM432 253h3v1h-1v1h1v1h-3v-1h1v-1h-1zM801 360h3v1h-1v1h1v1h-3v-1h1v-1h-1zM813 359h3v1h-1v1h1v1h-3v-1h1v-1h-1zM358 211h3v1h-1v1h1v1h-3v-1h1v-1h-1zM519 266h3v1h-1v1h1v1h-3v-1h1v-1h-1zM751 287h3v1h-1v1h1v1h-3v-1h1v-1h-1zM755 294h3v1h-1v1h1v1h-3v-1h1v-1h-1zM447 459h3v1h-1v1h1v1h-3v-1h1v-1h-1zM454 465h3v1h-1v1h1v1h-3v-1h1v-1h-1zM392 295h3v1h-1v1h1v1h-3v-1h1v-1h-1zM604 283h3v1h-1v1h1v1h-3v-1h1v-1h-1zM588 319h3v1h-1v1h1v1h-3v-1h1v-1h-1zM709 435h3v1h-1v1h1v1h-3v-1h1v-1h-1zM454 413h3v1h-1v1h1v1h-3v-1h1v-1h-1zM461 407h3v1h-1v1h1v1h-3v-1h1v-1h-1zM542 340h3v1h-1v1h1v1h-3v-1h1v-1h-1zM424 218h3v1h-1v1h1v1h-3v-1h1v-1h-1zM796 250h3v1h-1v1h1v1h-3v-1h1v-1h-1zM525 208h3v1h-1v1h1v1h-3v-1h1v-1h-1zM535 219h3v1h-1v1h1v1h-3v-1h1v-1h-1zM429 200h3v1h-1v1h1v1h-3v-1h1v-1h-1zM429 206h3v1h-1v1h1v1h-3v-1h1v-1h-1zM692 225h3v1h-1v1h1v1h-3v-1h1v-1h-1zM700 225h3v1h-1v1h1v1h-3v-1h1v-1h-1zM707 226h3v1h-1v1h1v1h-3v-1h1v-1h-1zM644 358h3v1h-1v1h1v1h-3v-1h1v-1h-1zM814 298h3v1h-1v1h1v1h-3v-1h1v-1h-1zM678 383h3v1h-1v1h1v1h-3v-1h1v-1h-1zM678 397h3v1h-1v1h1v1h-3v-1h1v-1h-1zM664 241h3v1h-1v1h1v1h-3v-1h1v-1h-1zM674 250h3v1h-1v1h1v1h-3v-1h1v-1h-1zM492 386h3v1h-1v1h1v1h-3v-1h1v-1h-1zM401 432h3v1h-1v1h1v1h-3v-1h1v-1h-1zM407 433h3v1h-1v1h1v1h-3v-1h1v-1h-1zM414 433h3v1h-1v1h1v1h-3v-1h1v-1h-1zM646 374h3v1h-1v1h1v1h-3v-1h1v-1h-1zM476 452h3v1h-1v1h1v1h-3v-1h1v-1h-1zM729 324h3v1h-1v1h1v1h-3v-1h1v-1h-1zM759 267h3v1h-1v1h1v1h-3v-1h1v-1h-1zM568 294h3v1h-1v1h1v1h-3v-1h1v-1h-1zM496 374h3v1h-1v1h1v1h-3v-1h1v-1h-1zM504 376h3v1h-1v1h1v1h-3v-1h1v-1h-1zM622 346h3v1h-1v1h1v1h-3v-1h1v-1h-1zM714 235h3v1h-1v1h1v1h-3v-1h1v-1h-1zM714 435h3v1h-1v1h1v1h-3v-1h1v-1h-1zM629 344h3v1h-1v1h1v1h-3v-1h1v-1h-1zM544 233h3v1h-1v1h1v1h-3v-1h1v-1h-1zM551 232h3v1h-1v1h1v1h-3v-1h1v-1h-1zM475 241h3v1h-1v1h1v1h-3v-1h1v-1h-1zM476 252h3v1h-1v1h1v1h-3v-1h1v-1h-1zM354 328h3v1h-1v1h1v1h-3v-1h1v-1h-1zM573 202h3v1h-1v1h1v1h-3v-1h1v-1h-1zM636 274h3v1h-1v1h1v1h-3v-1h1v-1h-1zM834 377h3v1h-1v1h1v1h-3v-1h1v-1h-1zM576 378h3v1h-1v1h1v1h-3v-1h1v-1h-1zM581 377h3v1h-1v1h1v1h-3v-1h1v-1h-1zM442 375h3v1h-1v1h1v1h-3v-1h1v-1h-1zM408 340h3v1h-1v1h1v1h-3v-1h1v-1h-1zM694 457h3v1h-1v1h1v1h-3v-1h1v-1h-1zM699 461h3v1h-1v1h1v1h-3v-1h1v-1h-1zM382 444h3v1h-1v1h1v1h-3v-1h1v-1h-1zM382 449h3v1h-1v1h1v1h-3v-1h1v-1h-1zM742 464h3v1h-1v1h1v1h-3v-1h1v-1h-1zM749 472h3v1h-1v1h1v1h-3v-1h1v-1h-1zM448 327h3v1h-1v1h1v1h-3v-1h1v-1h-1zM349 400h3v1h-1v1h1v1h-3v-1h1v-1h-1zM348 407h3v1h-1v1h1v1h-3v-1h1v-1h-1zM368 337h3v1h-1v1h1v1h-3v-1h1v-1h-1zM566 341h3v1h-1v1h1v1h-3v-1h1v-1h-1zM563 204h3v1h-1v1h1v1h-3v-1h1v-1h-1zM456 282h3v1h-1v1h1v1h-3v-1h1v-1h-1zM647 216h3v1h-1v1h1v1h-3v-1h1v-1h-1zM647 222h3v1h-1v1h1v1h-3v-1h1v-1h-1zM637 231h3v1h-1v1h1v1h-3v-1h1v-1h-1zM643 229h3v1h-1v1h1v1h-3v-1h1v-1h-1zM492 407h3v1h-1v1h1v1h-3v-1h1v-1h-1zM498 407h3v1h-1v1h1v1h-3v-1h1v-1h-1zM567 350h3v1h-1v1h1v1h-3v-1h1v-1h-1zM469 400h3v1h-1v1h1v1h-3v-1h1v-1h-1zM641 288h3v1h-1v1h1v1h-3v-1h1v-1h-1zM639 306h3v1h-1v1h1v1h-3v-1h1v-1h-1zM424 351h3v1h-1v1h1v1h-3v-1h1v-1h-1zM431 358h3v1h-1v1h1v1h-3v-1h1v-1h-1zM419 430h3v1h-1v1h1v1h-3v-1h1v-1h-1zM797 235h3v1h-1v1h1v1h-3v-1h1v-1h-1zM690 306h3v1h-1v1h1v1h-3v-1h1v-1h-1zM414 388h3v1h-1v1h1v1h-3v-1h1v-1h-1zM491 201h3v1h-1v1h1v1h-3v-1h1v-1h-1zM497 200h3v1h-1v1h1v1h-3v-1h1v-1h-1zM442 454h3v1h-1v1h1v1h-3v-1h1v-1h-1zM401 323h3v1h-1v1h1v1h-3v-1h1v-1h-1zM396 307h3v1h-1v1h1v1h-3v-1h1v-1h-1zM490 237h3v1h-1v1h1v1h-3v-1h1v-1h-1zM489 369h3v1h-1v1h1v1h-3v-1h1v-1h-1zM775 268h3v1h-1v1h1v1h-3v-1h1v-1h-1zM505 432h3v1h-1v1h1v1h-3v-1h1v-1h-1zM406 452h3v1h-1v1h1v1h-3v-1h1v-1h-1zM615 316h3v1h-1v1h1v1h-3v-1h1v-1h-1zM618 255h3v1h-1v1h1v1h-3v-1h1v-1h-1zM605 345h3v1h-1v1h1v1h-3v-1h1v-1h-1zM685 307h3v1h-1v1h1v1h-3v-1h1v-1h-1zM572 242h3v1h-1v1h1v1h-3v-1h1v-1h-1zM377 276h3v1h-1v1h1v1h-3v-1h1v-1h-1zM528 369h3v1h-1v1h1v1h-3v-1h1v-1h-1zM378 436h3v1h-1v1h1v1h-3v-1h1v-1h-1zM389 445h3v1h-1v1h1v1h-3v-1h1v-1h-1zM625 246h3v1h-1v1h1v1h-3v-1h1v-1h-1zM633 245h3v1h-1v1h1v1h-3v-1h1v-1h-1zM723 317h3v1h-1v1h1v1h-3v-1h1v-1h-1zM475 230h3v1h-1v1h1v1h-3v-1h1v-1h-1zM830 293h3v1h-1v1h1v1h-3v-1h1v-1h-1zM712 362h3v1h-1v1h1v1h-3v-1h1v-1h-1zM802 303h3v1h-1v1h1v1h-3v-1h1v-1h-1zM810 304h3v1h-1v1h1v1h-3v-1h1v-1h-1zM816 303h3v1h-1v1h1v1h-3v-1h1v-1h-1zM775 390h3v1h-1v1h1v1h-3v-1h1v-1h-1zM502 371h3v1h-1v1h1v1h-3v-1h1v-1h-1zM394 333h3v1h-1v1h1v1h-3v-1h1v-1h-1zM749 438h3v1h-1v1h1v1h-3v-1h1v-1h-1zM463 456h3v1h-1v1h1v1h-3v-1h1v-1h-1zM562 287h3v1h-1v1h1v1h-3v-1h1v-1h-1zM339 400h3v1h-1v1h1v1h-3v-1h1v-1h-1zM613 288h3v1h-1v1h1v1h-3v-1h1v-1h-1zM614 393h3v1h-1v1h1v1h-3v-1h1v-1h-1zM533 362h3v1h-1v1h1v1h-3v-1h1v-1h-1zM666 338h3v1h-1v1h1v1h-3v-1h1v-1h-1zM751 203h3v1h-1v1h1v1h-3v-1h1v-1h-1zM757 207h3v1h-1v1h1v1h-3v-1h1v-1h-1zM485 433h3v1h-1v1h1v1h-3v-1h1v-1h-1zM541 241h3v1h-1v1h1v1h-3v-1h1v-1h-1zM547 246h3v1h-1v1h1v1h-3v-1h1v-1h-1zM380 393h3v1h-1v1h1v1h-3v-1h1v-1h-1zM372 438h3v1h-1v1h1v1h-3v-1h1v-1h-1zM571 223h3v1h-1v1h1v1h-3v-1h1v-1h-1zM673 353h3v1h-1v1h1v1h-3v-1h1v-1h-1zM680 347h3v1h-1v1h1v1h-3v-1h1v-1h-1zM769 428h3v1h-1v1h1v1h-3v-1h1v-1h-1zM528 310h3v1h-1v1h1v1h-3v-1h1v-1h-1zM417 220h3v1h-1v1h1v1h-3v-1h1v-1h-1zM452 225h3v1h-1v1h1v1h-3v-1h1v-1h-1zM459 224h3v1h-1v1h1v1h-3v-1h1v-1h-1zM470 226h3v1h-1v1h1v1h-3v-1h1v-1h-1zM374 264h3v1h-1v1h1v1h-3v-1h1v-1h-1zM578 392h3v1h-1v1h1v1h-3v-1h1v-1h-1zM449 372h3v1h-1v1h1v1h-3v-1h1v-1h-1zM780 336h3v1h-1v1h1v1h-3v-1h1v-1h-1zM781 328h3v1h-1v1h1v1h-3v-1h1v-1h-1zM759 215h3v1h-1v1h1v1h-3v-1h1v-1h-1zM764 214h3v1h-1v1h1v1h-3v-1h1v-1h-1zM703 391h3v1h-1v1h1v1h-3v-1h1v-1h-1zM673 372h3v1h-1v1h1v1h-3v-1h1v-1h-1zM673 377h3v1h-1v1h1v1h-3v-1h1v-1h-1zM514 199h3v1h-1v1h1v1h-3v-1h1v-1h-1zM653 200h3v1h-1v1h1v1h-3v-1h1v-1h-1zM835 305h3v1h-1v1h1v1h-3v-1h1v-1h-1zM544 262h3v1h-1v1h1v1h-3v-1h1v-1h-1zM440 397h3v1h-1v1h1v1h-3v-1h1v-1h-1zM440 411h3v1h-1v1h1v1h-3v-1h1v-1h-1zM441 418h3v1h-1v1h1v1h-3v-1h1v-1h-1zM667 372h3v1h-1v1h1v1h-3v-1h1v-1h-1zM704 373h3v1h-1v1h1v1h-3v-1h1v-1h-1zM464 294h3v1h-1v1h1v1h-3v-1h1v-1h-1zM705 334h3v1h-1v1h1v1h-3v-1h1v-1h-1zM565 254h3v1h-1v1h1v1h-3v-1h1v-1h-1zM684 382h3v1h-1v1h1v1h-3v-1h1v-1h-1zM545 268h3v1h-1v1h1v1h-3v-1h1v-1h-1zM551 268h3v1h-1v1h1v1h-3v-1h1v-1h-1zM413 380h3v1h-1v1h1v1h-3v-1h1v-1h-1zM377 295h3v1h-1v1h1v1h-3v-1h1v-1h-1zM703 368h3v1h-1v1h1v1h-3v-1h1v-1h-1zM346 352h3v1h-1v1h1v1h-3v-1h1v-1h-1zM822 380h3v1h-1v1h1v1h-3v-1h1v-1h-1zM728 393h3v1h-1v1h1v1h-3v-1h1v-1h-1zM780 252h3v1h-1v1h1v1h-3v-1h1v-1h-1zM445 437h3v1h-1v1h1v1h-3v-1h1v-1h-1zM417 401h3v1h-1v1h1v1h-3v-1h1v-1h-1zM670 416h3v1h-1v1h1v1h-3v-1h1v-1h-1zM675 422h3v1h-1v1h1v1h-3v-1h1v-1h-1zM628 263h3v1h-1v1h1v1h-3v-1h1v-1h-1zM634 264h3v1h-1v1h1v1h-3v-1h1v-1h-1zM642 264h3v1h-1v1h1v1h-3v-1h1v-1h-1zM603 334h3v1h-1v1h1v1h-3v-1h1v-1h-1zM742 264h3v1h-1v1h1v1h-3v-1h1v-1h-1zM510 359h3v1h-1v1h1v1h-3v-1h1v-1h-1zM368 374h3v1h-1v1h1v1h-3v-1h1v-1h-1zM364 309h3v1h-1v1h1v1h-3v-1h1v-1h-1zM434 430h3v1h-1v1h1v1h-3v-1h1v-1h-1zM516 411h7v1h-7z M519 408v7h1v-7zM525 411h7v1h-7z M528 408v7h1v-7zM534 411h7v1h-7z M537 408v7h1v-7zM542 411h7v1h-7z M546 408v7h1v-7zM551 411h7v1h-7z M554 408v7h1v-7zM560 411h7v1h-7z M563 408v7h1v-7zM569 411h7v1h-7z M572 408v7h1v-7zM578 411h7v1h-7z M581 408v7h1v-7zM587 411h7v1h-7z M590 408v7h1v-7zM596 411h7v1h-7z M599 408v7h1v-7zM605 411h7v1h-7z M608 408v7h1v-7zM614 411h7v1h-7z M617 408v7h1v-7zM623 411h7v1h-7z M626 408v7h1v-7zM632 411h7v1h-7z M634 408v7h1v-7zM640 411h7v1h-7z M643 408v7h1v-7zM649 411h7v1h-7z M652 408v7h1v-7zM516 420h7v1h-7z M519 418v7h1v-7zM525 420h7v1h-7z M528 418v7h1v-7zM534 420h7v1h-7z M537 418v7h1v-7zM542 420h7v1h-7z M546 418v7h1v-7zM551 420h7v1h-7z M554 418v7h1v-7zM560 420h7v1h-7z M563 418v7h1v-7zM569 420h7v1h-7z M572 418v7h1v-7zM578 420h7v1h-7z M581 418v7h1v-7zM587 420h7v1h-7z M590 418v7h1v-7zM596 420h7v1h-7z M599 418v7h1v-7zM605 420h7v1h-7z M608 418v7h1v-7zM614 420h7v1h-7z M617 418v7h1v-7zM623 420h7v1h-7z M626 418v7h1v-7zM632 420h7v1h-7z M634 418v7h1v-7zM640 420h7v1h-7z M643 418v7h1v-7zM649 420h7v1h-7z M652 418v7h1v-7zM518 431h3v1h-3zM527 431h3v1h-3zM536 431h3v1h-3zM544 431h3v1h-3zM553 431h3v1h-3zM562 431h3v1h-3zM571 431h3v1h-3zM580 431h3v1h-3zM589 431h3v1h-3zM598 431h3v1h-3zM607 431h3v1h-3zM616 431h3v1h-3zM625 431h3v1h-3zM634 431h3v1h-3zM642 431h3v1h-3zM651 431h3v1h-3z" fill="#e81c1c" shape-rendering="crispEdges"/>
<path d="M652 357h2v3h-2zM677 315h3v2h-3zM683 316h3v2h-3zM626 386h2v3h-2zM638 398h3v2h-3zM584 258h3v2h-3zM421 309h3v2h-3zM420 314h3v2h-3zM665 200h3v2h-3zM666 219h3v2h-3zM781 417h3v2h-3zM682 340h3v2h-3zM794 407h3v2h-3zM421 418h2v3h-2zM739 423h3v2h-3zM809 398h3v2h-3zM576 383h3v2h-3zM390 404h3v2h-3zM724 366h2v3h-2zM397 229h3v2h-3zM723 338h3v2h-3zM735 338h3v2h-3zM683 323h3v2h-3zM688 328h2v3h-2zM464 247h3v2h-3zM592 215h3v2h-3zM747 269h3v2h-3zM602 268h2v3h-2zM780 464h3v2h-3zM360 249h2v3h-2zM499 213h3v2h-3zM587 253h2v3h-2zM490 261h3v2h-3zM594 317h2v3h-2zM734 393h3v2h-3zM379 454h3v2h-3zM702 254h3v2h-3zM443 368h3v2h-3zM578 332h2v3h-2zM692 278h2v3h-2zM704 276h2v3h-2zM490 220h2v3h-2zM533 334h2v3h-2zM515 286h3v2h-3zM523 320h3v2h-3zM811 267h3v2h-3zM509 279h3v2h-3zM467 354h3v2h-3zM538 322h3v2h-3zM717 419h3v2h-3zM729 333h3v2h-3zM460 462h3v2h-3zM536 199h3v2h-3zM663 343h3v2h-3zM614 326h3v2h-3zM369 365h3v2h-3zM432 215h3v2h-3zM511 209h3v2h-3zM794 421h3v2h-3zM722 234h3v2h-3zM800 229h2v3h-2zM359 352h3v2h-3zM636 349h2v3h-2zM642 344h2v3h-2zM561 319h3v2h-3zM465 417h2v3h-2zM464 469h3v2h-3zM654 275h3v2h-3zM656 303h3v2h-3zM380 314h3v2h-3zM771 412h3v2h-3zM539 264h3v2h-3zM644 339h3v2h-3zM346 270h3v2h-3zM833 428h2v3h-2zM767 223h3v2h-3zM810 414h3v2h-3zM788 398h3v2h-3zM587 302h3v2h-3zM681 365h3v2h-3zM659 403h3v2h-3zM698 365h3v2h-3zM698 371h2v3h-2zM733 400h3v2h-3zM739 405h2v3h-2zM532 208h3v2h-3zM569 237h2v3h-2zM581 225h3v2h-3zM587 218h3v2h-3zM697 439h2v3h-2zM713 455h3v2h-3zM790 228h3v2h-3zM350 307h3v2h-3zM708 457h3v2h-3zM708 468h3v2h-3zM570 280h3v2h-3zM484 272h3v2h-3zM603 292h2v3h-2zM614 293h3v2h-3zM592 285h2v3h-2zM349 211h2v3h-2zM354 396h3v2h-3zM584 230h3v2h-3zM609 211h3v2h-3zM666 428h3v2h-3zM802 212h3v2h-3zM802 234h3v2h-3zM363 410h3v2h-3zM386 281h3v2h-3zM570 261h3v2h-3zM740 411h3v2h-3zM779 355h2v3h-2zM735 240h3v2h-3zM475 413h2v3h-2zM448 209h3v2h-3zM466 339h2v3h-2zM479 339h3v2h-3zM558 377h3v2h-3zM570 390h3v2h-3zM794 444h3v2h-3zM454 236h3v2h-3zM351 355h2v3h-2zM579 241h2v3h-2zM428 411h3v2h-3zM629 253h3v2h-3zM697 214h3v2h-3zM765 304h3v2h-3zM766 311h3v2h-3zM590 344h3v2h-3zM767 238h3v2h-3zM789 239h3v2h-3zM367 462h3v2h-3zM375 468h2v3h-2zM613 365h3v2h-3zM726 360h3v2h-3zM533 328h2v3h-2zM730 431h2v3h-2zM737 431h3v2h-3zM744 432h3v2h-3zM488 345h3v2h-3zM553 326h2v3h-2zM343 217h2v3h-2zM666 279h3v2h-3zM694 295h2v3h-2zM788 358h3v2h-3zM436 349h3v2h-3zM682 217h3v2h-3zM492 306h2v3h-2zM498 380h3v2h-3zM401 396h3v2h-3zM544 379h3v2h-3zM544 384h3v2h-3zM757 355h3v2h-3zM762 362h3v2h-3zM545 403h3v2h-3zM432 459h2v3h-2zM680 331h3v2h-3zM756 309h3v2h-3zM700 303h3v2h-3zM621 327h2v3h-2zM642 221h3v2h-3zM412 357h3v2h-3zM411 364h3v2h-3zM391 338h3v2h-3zM395 353h2v3h-2zM395 471h3v2h-3zM406 470h2v3h-2zM690 204h3v2h-3zM527 245h2v3h-2zM462 439h2v3h-2zM467 439h2v3h-2zM509 396h3v2h-3zM388 264h2v3h-2zM660 309h2v3h-2zM698 288h3v2h-3zM728 222h3v2h-3zM827 357h2v3h-2zM681 208h3v2h-3zM682 222h3v2h-3zM832 343h2v3h-2zM503 311h3v2h-3zM684 301h2v3h-2zM810 434h2v3h-2zM736 267h3v2h-3zM734 451h2v3h-2zM514 310h2v3h-2zM712 201h3v2h-3zM799 279h2v3h-2zM628 203h3v2h-3zM410 290h2v3h-2zM417 289h2v3h-2zM775 218h3v2h-3zM467 448h2v3h-2zM826 306h3v2h-3zM797 472h3v2h-3zM438 276h3v2h-3zM604 230h3v2h-3zM440 233h2v3h-2zM782 203h2v3h-2zM738 346h2v3h-2zM682 249h3v2h-3zM456 333h3v2h-3zM732 380h3v2h-3zM738 386h3v2h-3zM431 442h3v2h-3zM437 437h3v2h-3zM425 464h2v3h-2zM486 289h3v2h-3zM650 265h2v3h-2zM657 265h3v2h-3zM521 246h3v2h-3zM497 318h2v3h-2zM491 364h3v2h-3zM698 403h3v2h-3zM560 351h2v3h-2zM479 465h3v2h-3zM383 237h2v3h-2zM777 367h3v2h-3zM406 240h3v2h-3zM407 354h3v2h-3zM827 319h3v2h-3zM444 360h3v2h-3zM349 255h2v3h-2zM694 264h3v2h-3zM737 443h3v2h-3zM449 402h3v2h-3zM381 353h3v2h-3zM381 366h3v2h-3zM381 374h2v3h-2zM474 283h2v3h-2zM377 216h3v2h-3zM610 228h3v2h-3zM776 451h3v2h-3zM781 441h2v3h-2zM530 289h2v3h-2zM457 291h3v2h-3zM393 275h2v3h-2zM344 378h3v2h-3zM411 304h3v2h-3zM578 289h3v2h-3zM584 296h3v2h-3zM350 300h2v3h-2zM412 236h2v3h-2zM412 248h3v2h-3zM563 310h3v2h-3zM570 305h3v2h-3zM560 343h3v2h-3zM470 297h3v2h-3zM387 390h2v3h-2zM381 252h3v2h-3zM388 259h3v2h-3zM395 264h2v3h-2zM770 289h3v2h-3zM712 335h3v2h-3zM756 395h2v3h-2zM597 335h2v3h-2zM476 215h3v2h-3zM477 221h2v3h-2zM814 365h3v2h-3zM345 384h3v2h-3zM778 471h3v2h-3zM353 242h3v2h-3zM645 281h3v2h-3zM440 292h2v3h-2zM574 266h3v2h-3zM761 399h3v2h-3zM742 370h2v3h-2zM690 371h3v2h-3zM733 371h3v2h-3zM367 320h3v2h-3zM627 287h3v2h-3zM633 294h3v2h-3zM640 318h3v2h-3zM703 263h2v3h-2zM816 210h3v2h-3zM793 259h3v2h-3zM800 445h2v3h-2zM529 348h2v3h-2zM407 233h3v2h-3zM417 238h3v2h-3zM366 315h3v2h-3zM564 336h3v2h-3zM468 411h3v2h-3zM807 360h2v3h-2zM369 199h3v2h-3zM564 264h2v3h-2zM742 278h3v2h-3zM745 283h3v2h-3zM697 415h3v2h-3zM514 352h3v2h-3zM588 313h2v3h-2zM543 319h2v3h-2zM404 291h3v2h-3zM479 345h2v3h-2zM352 261h2v3h-2zM531 213h2v3h-2zM815 242h3v2h-3zM821 297h3v2h-3zM677 391h3v2h-3zM457 247h2v3h-2zM743 224h3v2h-3zM447 318h3v2h-3zM752 349h3v2h-3zM752 356h3v2h-3zM752 364h2v3h-2zM555 390h2v3h-2zM386 468h3v2h-3zM717 240h3v2h-3zM531 377h3v2h-3zM539 378h2v3h-2zM558 233h3v2h-3zM637 390h3v2h-3zM630 279h3v2h-3zM436 381h3v2h-3zM634 324h3v2h-3zM633 331h3v2h-3zM373 335h2v3h-2zM707 384h3v2h-3zM463 281h3v2h-3zM485 407h3v2h-3zM504 406h3v2h-3zM640 293h2v3h-2zM740 364h3v2h-3zM511 324h2v3h-2zM483 230h3v2h-3zM500 427h2v3h-2zM773 439h3v2h-3zM608 315h3v2h-3zM728 442h2v3h-2zM691 312h2v3h-2zM535 369h2v3h-2zM395 451h3v2h-3zM717 312h2v3h-2zM795 415h3v2h-3zM735 224h2v3h-2zM733 231h2v3h-2zM814 293h2v3h-2zM823 292h3v2h-3zM446 293h3v2h-3zM605 327h3v2h-3zM397 390h3v2h-3zM731 468h2v3h-2zM483 390h3v2h-3zM666 356h2v3h-2zM529 355h3v2h-3zM425 265h2v3h-2zM425 278h3v2h-3zM489 242h3v2h-3zM640 324h3v2h-3zM524 377h2v3h-2zM366 393h2v3h-2zM714 461h2v3h-2zM748 301h3v2h-3zM517 357h3v2h-3zM517 364h2v3h-2zM825 348h3v2h-3zM464 226h3v2h-3zM380 269h3v2h-3zM588 401h3v2h-3zM766 337h3v2h-3zM373 231h2v3h-2zM813 232h3v2h-3zM803 254h2v3h-2zM743 200h3v2h-3zM752 339h2v3h-2zM530 260h2v3h-2zM662 365h3v2h-3zM346 390h3v2h-3zM703 354h2v3h-2zM818 374h3v2h-3zM832 390h3v2h-3zM454 267h3v2h-3zM460 260h3v2h-3zM773 246h2v3h-2zM538 291h3v2h-3zM624 256h3v2h-3zM504 359h3v2h-3z" fill="#d02020" shape-rendering="crispEdges"/>
<circle cx="746" cy="208" r="2" fill="none" stroke="#e81c1c" stroke-width="1"/><path d="M746 204.5v7" stroke="#e81c1c" stroke-width="1"/>
<circle cx="830" cy="333" r="2" fill="none" stroke="#e81c1c" stroke-width="1"/><path d="M830 329.5v7" stroke="#e81c1c" stroke-width="1"/>
<circle cx="669" cy="428" r="2" fill="none" stroke="#e81c1c" stroke-width="1"/><path d="M669 424.5v7" stroke="#e81c1c" stroke-width="1"/>
<circle cx="784" cy="462" r="2" fill="none" stroke="#e81c1c" stroke-width="1"/><path d="M784 458.5v7" stroke="#e81c1c" stroke-width="1"/>
<path d="M245.0 361.0L531.4 661.6M245.0 120.0L531.4 610.4M528.0 361.0L655.9 610.4M528.0 120.0L684.0 610.4M531.4 610.4H684V661.6H531.4Z" stroke="#fff" stroke-width="1.1" fill="none"/>
<g stroke="#fff" stroke-width="0.9"><path d="M326 468 L343 485 M343 468 L326 485"/></g>
<circle cx="334.7" cy="476.5" r="5.5" fill="none" stroke="#40e0f0" stroke-width="1.2"/><path d="M324 476.5 H345 M334.7 466 V487" stroke="#40e0f0" stroke-width="1.3"/>
</svg>
<rect x="238" y="94" width="333.6" height="302.2" fill="#e4e0d4" />
<rect x="238" y="94" width="333.6" height="1" fill="#c8c4b8" />
<rect x="238" y="94" width="1" height="302.2" fill="#c8c4b8" />
<rect x="239" y="95" width="331.6" height="2" fill="#f8f6ee" />
<rect x="239" y="95" width="2" height="300.2" fill="#f8f6ee" />
<rect x="238" y="395.2" width="333.6" height="1" fill="#a8a498" />
<rect x="570.6" y="94" width="1" height="302.2" fill="#a8a498" />
<defs><linearGradient id="tg" x1="0" x2="1"><stop offset="0" stop-color="#0a246a"/><stop offset="1" stop-color="#a6caf0"/></linearGradient></defs>
<rect x="242" y="98" width="327" height="18" fill="url(#tg)" />
<rect x="244" y="100" width="15" height="14" fill="#f8f8f0" />
<rect x="244" y="100" width="15" height="2.5" fill="#101060" />
<path d="M247 104 L256 112 M256 104 L247 112" stroke="#c8c800" stroke-width="2.2"/>
<text x="261.5" y="111.3" font-family="Liberation Sans" font-size="11.6" font-weight="bold" fill="#fff" >Popview - 1</text>
<rect x="550" y="100.5" width="16" height="13.5" fill="#d4d0c8" />
<rect x="550" y="100.5" width="16" height="1" fill="#fff" />
<rect x="550" y="100.5" width="1" height="13.5" fill="#fff" />
<rect x="550" y="113" width="16" height="1" fill="#404040" />
<rect x="565" y="100.5" width="1" height="13.5" fill="#404040" />
<path d="M554 103.5 L561.5 110.5 M561.5 103.5 L554 110.5" stroke="#000" stroke-width="1.8"/>
<rect x="242" y="116" width="325.8" height="276.4" fill="#55cdad" />
<rect x="566.3" y="116" width="1.5" height="276.4" fill="#000" />
<rect x="242" y="391.6" width="325.8" height="1" fill="#000" />
<rect x="242" y="116" width="324.3" height="1.5" fill="#b4f6e6" />
<rect x="242" y="117.5" width="290" height="3" fill="#2e7062" />
<rect x="242" y="117.5" width="3" height="243" fill="#2e7062" />
<rect x="245" y="120" width="283.5" height="240.5" fill="#000" />
<rect x="528.5" y="118" width="2.5" height="245.5" fill="#b4f6e6" />
<rect x="242" y="360.5" width="289" height="3" fill="#b4f6e6" />
<rect x="531" y="117.5" width="2" height="247" fill="#000" />
<rect x="242" y="362.8" width="324.3" height="2" fill="#000" />
<svg x="245" y="120" width="283.5" height="240.5" viewBox="245 120 283.5 240.5">
<path d="M386 149H528M245 177H269.6M421 177H528M245 211.4H263M434 210.8H528" stroke="#e81c1c" stroke-width="1.3" fill="none"/>
<path d="M255.5 109.8L259.1 106.0L259.1 127.0M255.1 127.0L263.1 127.0M270.1 109.5L273.4 106.0L280.0 106.0L283.3 109.5L283.3 113.0L280.0 116.5L283.3 120.0L283.3 123.5L280.0 127.0L273.4 127.0L270.1 123.5M275.0 116.5L280.0 116.5M287.6 109.5L290.9 106.0L297.5 106.0L300.8 109.5L300.8 113.0L287.6 127.0L300.8 127.0M310.1 127.0L313.4 127.0L313.4 123.5L310.1 123.5L310.1 127.0M326.0 127.0L332.6 127.0L335.9 123.5L335.9 109.5L332.6 106.0L326.0 106.0L322.7 109.5L322.7 123.5L326.0 127.0M323.7 122.5L335.0 110.5M343.6 127.0L350.2 127.0L353.5 123.5L353.5 109.5L350.2 106.0L343.6 106.0L340.3 109.5L340.3 123.5L343.6 127.0M341.3 122.5L352.5 110.5M260.0 141.8L263.6 138.0L263.6 159.0M259.6 159.0L267.6 159.0M274.6 141.5L277.9 138.0L284.5 138.0L287.8 141.5L287.8 145.0L284.5 148.5L287.8 152.0L287.8 155.5L284.5 159.0L277.9 159.0L274.6 155.5M279.5 148.5L284.5 148.5M292.1 141.5L295.4 138.0L302.0 138.0L305.3 141.5L305.3 145.0L302.0 148.5L305.3 152.0L305.3 155.5L302.0 159.0L295.4 159.0L292.1 155.5M297.1 148.5L302.0 148.5M314.6 159.0L317.9 159.0L317.9 155.5L314.6 155.5L314.6 159.0M330.5 159.0L337.1 159.0L340.4 155.5L340.4 141.5L337.1 138.0L330.5 138.0L327.2 141.5L327.2 155.5L330.5 159.0M328.2 154.4L339.5 142.6M348.1 159.0L354.7 159.0L358.0 155.5L358.0 141.5L354.7 138.0L348.1 138.0L344.8 141.5L344.8 155.5L348.1 159.0M345.8 154.4L357.0 142.6M296.5 170.3L300.1 166.5L300.1 187.5M296.1 187.5L304.1 187.5M320.9 187.5L320.9 166.5L311.0 180.5L324.2 180.5M338.3 187.5L338.3 166.5L328.4 180.5L341.6 180.5M350.8 187.5L354.1 187.5L354.1 184.0L350.8 184.0L350.8 187.5M366.6 187.5L373.2 187.5L376.5 184.0L376.5 170.0L373.2 166.5L366.6 166.5L363.3 170.0L363.3 184.0L366.6 187.5M364.3 182.9L375.6 171.1M384.1 187.5L390.7 187.5L394.0 184.0L394.0 170.0L390.7 166.5L384.1 166.5L380.8 170.0L380.8 184.0L384.1 187.5M381.8 182.9L393.0 171.1M281.2 204.7L284.8 200.8L284.8 221.8M280.8 221.8L288.8 221.8M303.0 221.8L303.0 200.8L293.1 214.8L306.3 214.8M321.2 200.8L309.0 200.8L309.0 209.6L317.9 209.6L321.2 213.1L321.2 218.3L317.9 221.8L311.3 221.8L308.0 218.3M327.8 221.8L331.1 221.8L331.1 218.3L327.8 218.3L327.8 221.8M352.9 206.8L352.9 201.0M349.4 203.9L356.5 203.9M349.4 212.7L356.5 212.7M373.3 221.8L379.9 221.8L383.2 218.3L383.2 204.3L379.9 200.8L373.3 200.8L370.0 204.3L370.0 218.3L373.3 221.8M371.0 217.2L382.2 205.4M386.8 204.3L390.1 200.8L396.7 200.8L400.0 204.3L400.0 207.8L386.8 221.8L400.0 221.8" stroke="#e81c1c" stroke-width="1.5" fill="none" stroke-linejoin="round"/>
</svg>
<rect x="531" y="117.5" width="35.3" height="247.3" fill="#000" />
<rect x="533.3" y="118.6" width="33" height="33.2" fill="#55cdad" />
<rect x="535" y="120.39999999999999" width="29.5" height="29.6" fill="#9ee0d8" />
<rect x="535" y="120.39999999999999" width="29.5" height="2.5" fill="#c8fff4" />
<rect x="535" y="120.39999999999999" width="2.5" height="29.6" fill="#c8fff4" />
<rect x="535" y="147.5" width="29.5" height="2.5" fill="#3c8c7c" />
<rect x="562" y="120.39999999999999" width="2.5" height="29.6" fill="#3c8c7c" />
<rect x="539.5" y="125.1" width="21" height="21" fill="none" stroke="#000" stroke-width="1.4"/>
<rect x="533.3" y="153.4" width="33" height="33.2" fill="#55cdad" />
<rect x="535" y="155.20000000000002" width="29.5" height="29.6" fill="#9ee0d8" />
<rect x="535" y="155.20000000000002" width="29.5" height="2.5" fill="#c8fff4" />
<rect x="535" y="155.20000000000002" width="2.5" height="29.6" fill="#c8fff4" />
<rect x="535" y="182.3" width="29.5" height="2.5" fill="#3c8c7c" />
<rect x="562" y="155.20000000000002" width="2.5" height="29.6" fill="#3c8c7c" />
<rect x="539.5" y="159.9" width="21" height="21" fill="none" stroke="#000" stroke-width="1.4"/>
<rect x="533.3" y="188.2" width="33" height="33.2" fill="#55cdad" />
<rect x="535" y="190.0" width="29.5" height="29.6" fill="#9ee0d8" />
<rect x="535" y="190.0" width="29.5" height="2.5" fill="#c8fff4" />
<rect x="535" y="190.0" width="2.5" height="29.6" fill="#c8fff4" />
<rect x="535" y="217.1" width="29.5" height="2.5" fill="#3c8c7c" />
<rect x="562" y="190.0" width="2.5" height="29.6" fill="#3c8c7c" />
<rect x="539.5" y="194.7" width="21" height="21" fill="none" stroke="#000" stroke-width="1.4"/>
<rect x="533.3" y="223" width="33" height="33.2" fill="#55cdad" />
<rect x="535" y="224.8" width="29.5" height="29.6" fill="#9ee0d8" />
<rect x="535" y="224.8" width="29.5" height="2.5" fill="#c8fff4" />
<rect x="535" y="224.8" width="2.5" height="29.6" fill="#c8fff4" />
<rect x="535" y="251.9" width="29.5" height="2.5" fill="#3c8c7c" />
<rect x="562" y="224.8" width="2.5" height="29.6" fill="#3c8c7c" />
<rect x="539.5" y="229.5" width="21" height="21" fill="none" stroke="#000" stroke-width="1.4"/>
<rect x="533.3" y="257.8" width="33" height="33.2" fill="#55cdad" />
<rect x="535" y="259.6" width="29.5" height="29.6" fill="#9ee0d8" />
<rect x="535" y="259.6" width="29.5" height="2.5" fill="#c8fff4" />
<rect x="535" y="259.6" width="2.5" height="29.6" fill="#c8fff4" />
<rect x="535" y="286.7" width="29.5" height="2.5" fill="#3c8c7c" />
<rect x="562" y="259.6" width="2.5" height="29.6" fill="#3c8c7c" />
<rect x="539.5" y="264.3" width="21" height="21" fill="none" stroke="#000" stroke-width="1.4"/>
<rect x="533.3" y="292.6" width="33" height="33.2" fill="#55cdad" />
<rect x="535" y="294.40000000000003" width="29.5" height="29.6" fill="#9ee0d8" />
<rect x="535" y="294.40000000000003" width="29.5" height="2.5" fill="#c8fff4" />
<rect x="535" y="294.40000000000003" width="2.5" height="29.6" fill="#c8fff4" />
<rect x="535" y="321.5" width="29.5" height="2.5" fill="#3c8c7c" />
<rect x="562" y="294.40000000000003" width="2.5" height="29.6" fill="#3c8c7c" />
<rect x="539.5" y="299.1" width="21" height="21" fill="none" stroke="#000" stroke-width="1.4"/>
<rect x="533.3" y="327.4" width="33" height="33.2" fill="#55cdad" />
<rect x="535" y="329.2" width="29.5" height="29.6" fill="#9ee0d8" />
<rect x="535" y="329.2" width="29.5" height="2.5" fill="#c8fff4" />
<rect x="535" y="329.2" width="2.5" height="29.6" fill="#c8fff4" />
<rect x="535" y="356.29999999999995" width="29.5" height="2.5" fill="#3c8c7c" />
<rect x="562" y="329.2" width="2.5" height="29.6" fill="#3c8c7c" />
<rect x="539.5" y="333.9" width="21" height="21" fill="none" stroke="#000" stroke-width="1.4"/>
<path d="M542.5 128.1 h10 v11 h-10 z" stroke="#000" stroke-width="2.2" fill="none"/><path d="M550 131.6 l-4 2 l4 2 M546 133.6 h5" stroke="#000" stroke-width="1.3" fill="none"/><path d="M553 132.6 h3 v-3 M554 126.6 h3.5 v4 h-3.5 z" stroke="#000" stroke-width="1.2" fill="none"/>
<path d="M542.5 167.4 V178.4 H557.5 V167.4" stroke="#000" stroke-width="2.2" fill="none"/><path d="M550 160.9 L544.5 166.4 L555.5 166.4 Z M547.5 166.4 h5 v9 h-5 z" fill="#000"/>
<path d="M546 210.2 H542.5 V197.2 H557.5 V210.2 H554" stroke="#000" stroke-width="2.2" fill="none"/><path d="M550 215.7 L544.5 209.2 L555.5 209.2 Z M547.5 202.2 h5 v7 h-5 z" fill="#000"/>
<path d="M546 235 V232 H557.5 V248 H546 V245" stroke="#000" stroke-width="2.2" fill="none"/><path d="M540.5 240 L546.5 234.5 L546.5 245.5 Z M546 237.5 h7 v5 h-7 z" fill="#000"/>
<path d="M554 269.8 V266.8 H542.5 V282.8 H554 V279.8" stroke="#000" stroke-width="2.2" fill="none"/><path d="M559.5 274.8 L553.5 269.3 L553.5 280.3 Z M547 272.3 h7 v5 h-7 z" fill="#000"/>
<rect x="547" y="306.6" width="6" height="6" stroke="#000" stroke-width="1.6" fill="none"/><path d="M550 305.6 L545 300.6 L555 300.6 Z M550 313.6 L545 318.6 L555 318.6 Z M546 309.6 L541 304.6 L541 314.6 Z M554 309.6 L559 304.6 L559 314.6 Z" fill="#000"/>
<rect x="547" y="341.4" width="6" height="6" stroke="#000" stroke-width="1.6" fill="none"/><path d="M550 334.9 L545.5 339.4 L554.5 339.4 Z M550 353.9 L545.5 349.4 L554.5 349.4 Z M540.5 344.4 L545 339.9 L545 348.9 Z M559.5 344.4 L555 339.9 L555 348.9 Z" fill="#000"/>
<rect x="243.5" y="364.8" width="322.8" height="26.8" fill="#55cdad" />
<rect x="245" y="366.3" width="320" height="23.5" fill="#9cdada" />
<rect x="245" y="366.3" width="320" height="2.5" fill="#b8f4ec" />
<rect x="245" y="366.3" width="2.5" height="23.5" fill="#b8f4ec" />
<rect x="245" y="387.3" width="320" height="2.5" fill="#3c8c7c" />
<rect x="562.5" y="366.3" width="2.5" height="23.5" fill="#3c8c7c" />
<text x="383" y="383" font-family="Liberation Mono" font-size="14.3" font-weight="bold" fill="#000" stroke="#000" stroke-width="0.3">Close</text>
</svg></body></html>
